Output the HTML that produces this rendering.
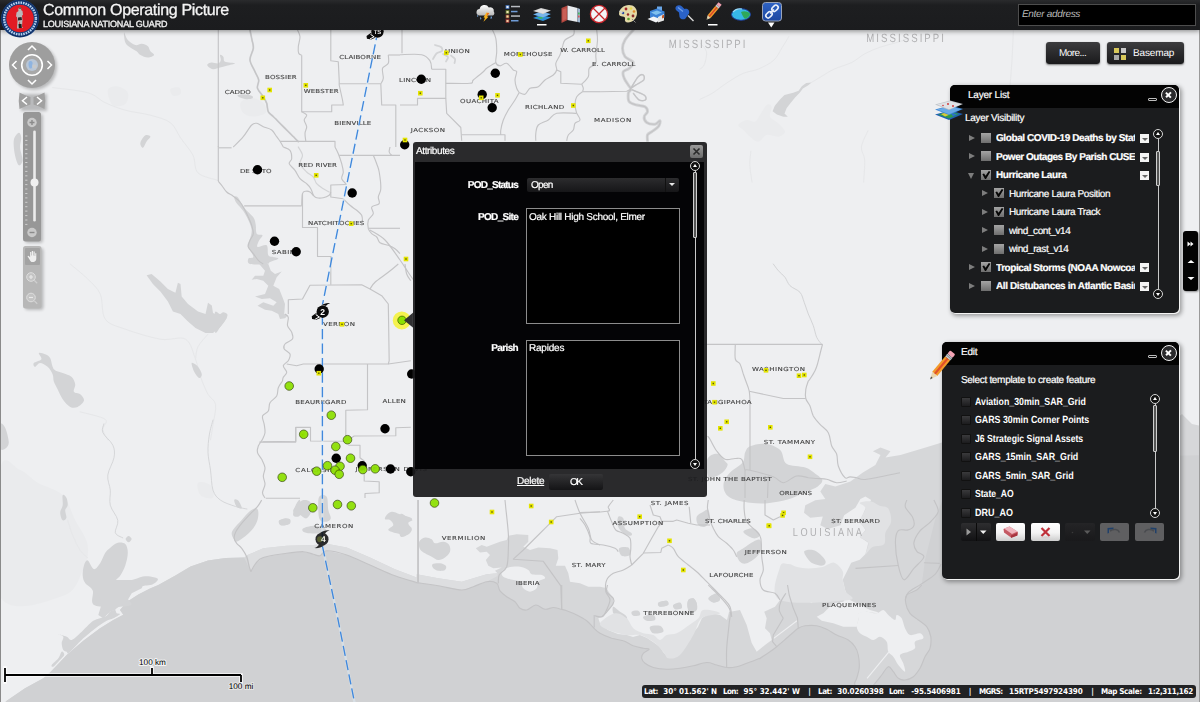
<!DOCTYPE html>
<html lang="en">
<head>
<meta charset="utf-8">
<title>Common Operating Picture - Louisiana National Guard</title>
<style>
*{box-sizing:border-box}
html,body{margin:0;padding:0}
body{text-rendering:geometricPrecision;width:1200px;height:702px;overflow:hidden;position:relative;background:#eeeff1;font-family:"Liberation Sans",sans-serif;font-size:10px;color:#fff}
.abs{position:absolute}
#map{position:absolute;left:0;top:0;width:1200px;height:702px}
#edgeL{position:absolute;left:0;top:0;width:1px;height:702px;background:#8a8a8a}
#edgeR{position:absolute;left:1199px;top:0;width:1px;height:702px;background:#9a9a9a}
#hdr{position:absolute;left:0;top:0;width:1200px;height:30px;background:linear-gradient(#2a2b2d 0,#1d1e20 5px,#1b1c1e 100%);box-shadow:0 1px 5px rgba(0,0,0,.45)}
#title{position:absolute;left:43px;top:0.500px;font-size:16px;line-height:20px;letter-spacing:-0.33px;color:#f4f4f4;white-space:nowrap;-webkit-text-stroke:.3px #f4f4f4}
#sub{position:absolute;left:43px;top:18px;font-size:9px;line-height:12px;letter-spacing:-0.2px;color:#f0f0f0;white-space:nowrap;-webkit-text-stroke:.35px #f0f0f0}
#search{position:absolute;left:1018px;top:4px;width:178px;height:22px;background:#000;border:1px solid #4d4d4d;color:#b9b9b9;font-style:italic;font-size:10px;line-height:20px;padding-left:3px;white-space:nowrap}
.btn{position:absolute;height:22px;border-radius:3px;background:linear-gradient(#3c3c3e,#1a1a1c);box-shadow:0 1px 2px rgba(0,0,0,.5);color:#fff;font-size:10px;line-height:22px;white-space:nowrap}
.panel{position:absolute;background:#1b1c1e;border-radius:5px;box-shadow:1px 1px 0 0 #f4f4f4,2px 2px 4px 1px rgba(0,0,0,.35)}
.panel .tb{position:absolute;left:0;top:0;right:0;height:23px;background:#030303;border-radius:5px 5px 0 0}
.t{position:absolute;white-space:nowrap;line-height:12px;font-size:10px;color:#fff;-webkit-text-stroke:.2px #fff}
.b{font-weight:bold}
.close{position:absolute;width:16px;height:16px;border-radius:50%;border:1.5px solid #f2f2f2;background:#2a2a2c}
.close:before,.close:after{content:"";position:absolute;left:3.2px;top:5.6px;width:6.6px;height:1.8px;background:#fff;transform:rotate(45deg)}
.close:after{transform:rotate(-45deg)}
.mini{position:absolute;width:9px;height:3px;border:1px solid #bdbdbd;border-radius:1px}
.cb{position:absolute;width:10px;height:10px;background:linear-gradient(#a4a4a4,#6e6e6e)}
.ck:after{content:"";position:absolute;left:0;top:0;width:10px;height:10px;background:#060606;clip-path:polygon(14% 42%,30% 34%,46% 58%,78% 10%,94% 18%,50% 90%,40% 90%)}
.cbd{position:absolute;width:10px;height:10px;background:linear-gradient(#3a3a3c,#1c1c1e);border:1px solid #111;border-radius:1px}
.tri-r{position:absolute;width:0;height:0;border-left:6px solid #7d7d7d;border-top:3.5px solid transparent;border-bottom:3.5px solid transparent}
.tri-d{position:absolute;width:0;height:0;border-top:6px solid #7d7d7d;border-left:3.5px solid transparent;border-right:3.5px solid transparent}
.menu{position:absolute;width:9px;height:9px;background:#f4f4f4}
.menu:after{content:"";position:absolute;left:1.5px;top:3.5px;border-top:3.5px solid #666;border-left:3px solid transparent;border-right:3px solid transparent}
.sc{position:absolute;width:10px;height:10px;border-radius:50%;border:1px solid #d8d8d8;background:#111}
.sc.up:after{content:"";position:absolute;left:1.5px;top:1.5px;border-bottom:3.5px solid #fff;border-left:2.5px solid transparent;border-right:2.5px solid transparent}
.sc.dn:after{content:"";position:absolute;left:1.5px;top:2.5px;border-top:3.5px solid #fff;border-left:2.5px solid transparent;border-right:2.5px solid transparent}
.strack{position:absolute;width:1px;background:#c8c8c8}
.sthumb{position:absolute;width:4px;border:1px solid #cfcfcf;background:#555;border-radius:1px}
</style>
</head>
<body>
<svg id="map" width="1200" height="702" viewBox="0 0 1200 702">
<rect width="1200" height="702" fill="#eeeff1"/>
<g fill="#eaebed"><path d="M738.3 125.0C738.9 123.3 743.9 120.6 746.7 120.0C749.4 119.4 752.8 122.5 755.0 121.7C757.2 120.8 758.1 117.8 760.0 115.0C761.9 112.2 764.7 106.4 766.7 105.0C768.6 103.6 771.1 104.7 771.7 106.7C772.2 108.6 768.9 113.9 770.0 116.7C771.1 119.4 775.8 120.8 778.3 123.3C780.8 125.8 785.0 129.4 785.0 131.7C785.0 133.9 781.4 136.1 778.3 136.7C775.3 137.2 770.0 134.2 766.7 135.0C763.3 135.8 761.1 141.4 758.3 141.7C755.6 141.9 752.5 138.6 750.0 136.7C747.5 134.7 745.3 131.9 743.3 130.0C741.4 128.1 737.8 126.7 738.3 125.0Z"/><path d="M107.8 90.2C108.6 87.0 114.5 86.0 117.8 86.4C121.1 86.8 126.6 89.7 127.8 92.7C129.1 95.6 127.8 101.8 125.3 103.9C122.8 106.0 115.7 107.5 112.8 105.2C109.9 102.9 106.9 93.3 107.8 90.2Z"/><path d="M170.4 88.9C171.5 87.6 177.5 86.8 179.2 87.6C180.9 88.5 181.5 92.6 180.5 93.9C179.4 95.2 174.6 96.5 172.9 95.7C171.3 94.8 169.4 90.2 170.4 88.9Z"/><path d="M240.6 102.7C241.9 100.2 246.9 97.7 250.6 97.7C254.4 97.7 260.7 100.2 263.2 102.7C265.7 105.2 267.3 110.4 265.7 112.7C264.0 115.0 256.9 116.5 253.1 116.5C249.4 116.5 245.2 115.0 243.1 112.7C241.0 110.4 239.3 105.2 240.6 102.7Z"/><path d="M0.0 470.1C3.3 449.2 13.8 468.0 20.1 470.1C26.3 472.2 30.5 478.5 37.6 482.7C44.7 486.8 56.4 488.9 62.7 495.2C68.9 501.5 71.0 511.9 75.2 520.3C79.4 528.6 86.5 537.0 87.7 545.3C89.0 553.7 86.9 561.9 82.7 570.4C78.5 578.8 76.4 591.7 62.7 595.9C48.9 600.2 10.4 616.9 0.0 595.9C-10.4 575.0 -3.3 491.1 0.0 470.1Z"/><path d="M198.0 482.7C199.7 481.0 208.0 482.7 210.5 485.2C213.0 487.7 214.7 496.0 213.0 497.7C211.4 499.4 203.0 497.7 200.5 495.2C198.0 492.7 196.3 484.3 198.0 482.7Z"/></g>
<g fill="none" stroke="#e6e7e9" stroke-linecap="round" stroke-linejoin="round"><path d="M70.2 264.0C73.1 266.5 82.7 274.0 87.7 279.0C92.7 284.1 97.3 287.4 100.3 294.1C103.2 300.8 101.1 313.3 105.3 319.1C109.4 325.0 116.1 325.8 125.3 329.2C134.5 332.5 150.4 337.5 160.4 339.2C170.4 340.9 179.6 335.8 185.5 339.2C191.3 342.5 193.0 353.0 195.5 359.2C198.0 365.5 198.4 370.9 200.5 376.8C202.6 382.6 205.5 389.7 208.0 394.3C210.5 398.9 214.7 399.3 215.5 404.4C216.4 409.4 213.9 418.5 213.0 424.4C212.2 430.3 210.9 437.4 210.5 439.9" stroke-width="1.0"/><path d="M208.0 334.2C206.3 336.3 200.1 342.5 198.0 346.7C195.9 350.9 195.9 357.1 195.5 359.2" stroke-width="1.0"/><path d="M80.2 411.9C84.4 413.1 101.5 416.5 105.3 419.4C109.0 422.3 102.3 426.0 102.8 429.4C103.2 432.8 106.9 438.2 107.8 439.9" stroke-width="1.0"/><path d="M52.6 87.6C58.5 88.5 78.9 90.2 87.7 92.7C96.5 95.2 99.0 99.8 105.3 102.7C111.5 105.6 117.8 108.1 125.3 110.2C132.8 112.3 142.9 113.1 150.4 115.2C157.9 117.3 165.4 119.0 170.4 122.7C175.4 126.5 176.7 132.3 180.5 137.8C184.2 143.2 190.1 149.5 193.0 155.3C195.9 161.2 193.8 168.7 198.0 172.9C202.2 177.0 214.7 179.1 218.0 180.4" stroke-width="1.0"/><path d="M67.7 520.3C68.5 522.8 70.6 530.3 72.7 535.3C74.8 540.3 77.7 546.6 80.2 550.3C82.7 554.1 86.5 556.6 87.7 557.8" stroke-width="1.0"/><path d="M811.6 82.4C813.2 81.5 817.5 78.8 821.3 76.6C825.1 74.3 829.3 71.3 834.3 69.0C839.4 66.7 846.6 65.0 851.7 62.5C856.7 60.0 860.0 56.4 864.7 53.8C869.4 51.3 874.8 49.1 879.8 47.3C884.9 45.5 890.3 44.4 895.0 43.0C899.7 41.6 905.8 39.4 908.0 38.7" stroke-width="1.0"/><path d="M788.8 36.5C787.8 38.3 784.9 43.4 782.3 47.3C779.8 51.3 777.6 56.7 773.7 60.3C769.7 63.9 763.6 66.8 758.5 69.0C753.4 71.2 748.4 71.2 743.3 73.3C738.3 75.5 733.2 78.8 728.2 82.0C723.1 85.2 717.7 89.9 713.0 92.8C708.3 95.7 702.2 98.2 700.0 99.3" stroke-width="1.0"/><path d="M700.0 43.0C701.1 44.4 705.8 48.1 706.5 51.7C707.2 55.3 705.4 61.8 704.3 64.7C703.2 67.6 700.7 68.3 700.0 69.0" stroke-width="1.0"/><path d="M750.9 151.3C750.7 153.5 749.7 159.2 749.8 164.3C750.0 169.5 751.6 179.1 752.0 182.1" stroke-width="1.0"/><path d="M867.9 130.8C866.8 133.5 862.0 142.1 861.4 147.0C860.9 151.9 864.3 154.2 864.7 160.0C865.0 165.8 863.8 178.4 863.6 182.1" stroke-width="1.0"/><path d="M1013.5 28.0C1013.2 33.3 1012.6 50.3 1012.0 60.0C1011.4 69.7 1010.3 81.7 1010.0 86.0" stroke-width="1"/></g>
<g fill="#d6d7d9"><path d="M-5 712 L6.7 700.8 L25 688.3 L43.3 678.3 L50 672.5 L66.7 655 L83.3 640.8 L100 628.3 L113.3 620 L123.3 614.7 L120 610 L126.7 602 L138.3 594.5 L150 588.5 L158.3 585 L175.4 575.4 L190.5 566.6 L208 560.4 L225.6 557.9 L244 557.4 L247.5 555 L263.3 548.3 L286.7 545.8 L313.3 545 L326.7 543.7 L346.7 547.5 L370 557.5 L395 569.2 L416.7 577.5 L416.7 574.2 L438.3 578.3 L461.7 581.7 L473.3 578.3 L486.7 574.2 L497.5 573.3 L495 570.8 L501.7 567.5 L493.3 568.3 L488.3 565.8 L485.8 560 L490 555 L486.7 551.7 L480 552.5 L475.8 548.3 L481.7 545 L486.7 546.7 L493.3 544.2 L500 541.7 L506.7 540 L508.3 535.8 L516.7 534.2 L528.3 535 L528.3 541.7 L523.3 546.7 L530 550 L538.3 547.5 L550 548.3 L557.5 550 L558.3 558.3 L555.8 565.8 L565 565.8 L568.3 573.3 L570 581.7 L580 583.3 L588.3 586.7 L600 586.7 L606 588 L613 598 L613.3 605 L608.3 610 L603.3 616.7 L598.3 618.3 L600 623.3 L608 630 L618 634 L627 635 L633 637 L640 635 L647 638 L653 642 L660 647 L663 652 L668 657 L677 652 L683 643 L690 640 L693 633 L698 627 L702 618 L710 613 L720 615 L727 620 L729 612 L740 610 L746.7 625 L751.7 643 L756.7 651.7 L765 645 L771.7 640 L770 633.3 L765 628.3 L766.7 618.3 L764.2 611.7 L775 606.7 L780 600 L783.3 595 L788.3 591.7 L793.3 595 L800 593.3 L806.7 600 L811.7 603.3 L816.7 596.7 L825 595 L833.3 593.3 L840 591.7 L846.7 596.7 L843.3 601.7 L833.3 603.3 L828.3 608.3 L823.3 613.3 L816.7 616.7 L821.7 620.8 L833.3 623.3 L843.3 626.7 L856.7 626.7 L858.3 620 L858.3 613.3 L866.7 611.7 L876.7 613.3 L883.3 610 L888.3 615 L888 615 L870 610 L850 600 L845.5 591.2 L842.7 579.8 L847 571.2 L851.2 562.7 L859.8 559.8 L865.5 554.1 L868.3 542.7 L859.8 537 L865.5 529.9 L859.8 521.4 L865.5 508.5 L871.2 500 L865.4 496.4 L860.4 498.9 L855.4 507.7 L844.1 515.2 L840.4 525.2 L827.8 529 L820.3 525.2 L822.8 516.4 L810.3 517.7 L804 512.7 L805.3 505.2 L815.3 500.2 L825.3 498.9 L820.3 491.4 L825.3 483.9 L835.3 486.4 L850.4 481.4 L862.9 472.6 L875.4 465.1 L880.5 455 L872.9 451.3 L880.5 447.5 L890.5 451.3 L885.5 457.5 L900.5 455 L925.6 447.5 L941.9 442.5 L960 441 L1000 440 L1100 436 L1165 428 L1182 414 L1192 424 L1210 428 L1210 712.0Z"/></g>
<g fill="#d0d1d3"><path d="M-5 712 L6.7 700.8 L25 688.3 L43.3 678.3 L50 672.5 L66.7 655 L83.3 640.8 L100 628.3 L113.3 620 L123.3 614.7 L120 610 L126.7 602 L138.3 594.5 L150 588.5 L158.3 585 L175.4 575.4 L190.5 566.6 L208 560.4 L225.6 557.9 L244 557.4 L250.8 571.7 L255.8 563.3 L263.3 557.5 L286.7 553.3 L303.3 551.7 L313.3 554.2 L320 555.8 L326.7 550.8 L346.7 555 L370 565 L395 575.8 L416.7 582.5 L416.7 582.5 L438.3 585.8 L461.7 590 L473.3 586.7 L486.7 581.7 L496.7 583.3 L500 590.8 L506.7 596.7 L515 601.7 L520 608.3 L526.7 610 L535.8 605 L545 609.2 L553.3 607.5 L560.8 609.2 L566.7 610.8 L576.7 615 L586.7 620.8 L593.3 627.5 L600 633.3 L611.7 638.3 L623.3 640.8 L633.3 645.8 L643.3 648.3 L649.2 649.2 L643.3 653.3 L641.7 658.3 L645 663.3 L653.3 667.5 L666.7 669.2 L680 668.3 L693.3 665.8 L706.7 662.5 L716.7 665 L726.7 667.5 L736.7 666.7 L746.7 663.3 L760 658.3 L760 658.3 L770 651.7 L776.7 646.7 L788.3 636.7 L798.3 628.3 L805 625.8 L816.7 625.8 L826.7 629.2 L836.7 635 L848.3 640 L855 646.7 L858.3 655 L859.2 668.3 L856.7 678.3 L855 685 L866.7 691.7 L875 683.3 L881.7 675 L888.3 666.7 L893.3 671.7 L898.3 678.3 L905 680 L913.3 676.7 L920 668.3 L925 656.7 L930 648.3 L930.8 636.7 L926.7 626.7 L918.3 620 L910 613.3 L905.8 603.3 L906.7 595 L916.7 590 L921.7 585 L925 560 L935 520 L950 480 L960 460 L1210 455 L1210 712.0Z"/></g>
<g fill="#d3d4d6"><path d="M207.5 64.2C208.1 63.5 209.9 62.6 211.7 62.5C213.5 62.4 216.8 63.8 218.3 63.3C219.9 62.9 220.6 61.4 220.8 60.0C221.1 58.6 219.6 55.6 220.0 55.0C220.4 54.4 222.5 55.6 223.3 56.7C224.2 57.8 223.1 60.6 225.0 61.7C226.9 62.8 234.7 62.6 235.0 63.3C235.3 64.0 229.2 65.1 226.7 65.8C224.2 66.5 222.2 66.9 220.0 67.5C217.8 68.1 215.3 69.3 213.3 69.2C211.4 69.0 209.3 67.5 208.3 66.7C207.4 65.8 206.9 64.9 207.5 64.2Z"/><path d="M237.5 95.3C238.1 94.8 241.0 94.1 243.3 94.2C245.7 94.2 250.1 95.1 251.7 95.8C253.2 96.5 253.3 97.8 252.5 98.3C251.7 98.9 248.8 99.3 246.7 99.2C244.6 99.0 241.5 98.1 240.0 97.5C238.5 96.9 236.9 95.9 237.5 95.3Z"/><path d="M234.2 197.0C234.4 196.2 236.2 195.9 237.5 197.0C238.8 198.1 240.4 201.7 241.7 203.7C242.9 205.6 243.6 207.0 245.0 208.7C246.4 210.3 248.5 212.0 250.0 213.7C251.5 215.3 253.2 216.7 254.2 218.7C255.1 220.6 255.4 222.8 255.8 225.3C256.2 227.8 255.6 232.0 256.7 233.7C257.8 235.3 262.1 234.2 262.5 235.3C262.9 236.4 260.0 238.4 259.2 240.3C258.3 242.3 256.2 246.2 257.5 247.0C258.8 247.8 264.9 243.9 266.7 245.3C268.5 246.7 267.2 253.4 268.3 255.3C269.4 257.3 271.7 256.4 273.3 257.0C275.0 257.6 278.9 257.8 278.3 258.7C277.8 259.5 271.9 261.1 270.0 262.0C268.1 262.9 270.0 263.7 266.7 264.0C263.3 264.3 253.1 264.9 250.0 264.0C246.9 263.1 247.8 259.8 248.3 258.7C248.9 257.5 253.1 258.4 253.3 257.0C253.6 255.6 251.0 252.3 250.0 250.3C249.0 248.4 247.5 247.3 247.5 245.3C247.5 243.4 249.3 241.2 250.0 238.7C250.7 236.2 251.8 233.1 251.7 230.3C251.5 227.6 250.3 224.8 249.2 222.0C248.1 219.2 246.5 216.2 245.0 213.7C243.5 211.2 241.5 208.9 240.0 207.0C238.5 205.1 236.8 203.7 235.8 202.0C234.9 200.3 233.9 197.8 234.2 197.0Z"/><path d="M259.2 264 L268.3 264 L270.8 270.7 L275 274 L281.7 271.5 L276.7 277.3 L273.3 285.7 L279.2 289 L282.5 297.3 L285 304 L284.2 314 L287.5 315.7 L285 318.2 L280 319 L278.3 314 L271.7 310.7 L265 309.8 L257.5 305.7 L263.3 302.3 L273.3 305.7 L276.7 302.3 L270 298.2 L261.7 299 L255 296.5 L265 294 L268.3 285.7 L263.3 280.7 L256.7 279 L251.7 279.8 L255 275.7 L263.3 275.7 L265 270.7Z"/><path d="M215.0 312.3C215.8 309.6 218.6 314.0 220.0 314.0C221.4 314.0 222.1 312.2 223.3 312.3C224.6 312.5 227.2 313.4 227.5 314.8C227.8 316.2 226.2 318.6 225.0 320.7C223.8 322.8 221.4 325.4 220.0 327.3C218.6 329.3 217.5 331.8 216.7 332.3C215.8 332.9 215.3 334.0 215.0 330.7C214.7 327.3 214.2 315.1 215.0 312.3Z"/><path d="M231.7 533.3C231.8 531.7 232.5 530.6 234.2 528.3C235.8 526.1 239.2 522.8 241.7 520.0C244.2 517.2 246.8 513.6 249.2 511.7C251.5 509.7 254.3 508.3 255.8 508.3C257.4 508.3 258.1 509.7 258.3 511.7C258.6 513.6 258.3 517.2 257.5 520.0C256.7 522.8 255.1 525.8 253.3 528.3C251.5 530.8 248.9 533.1 246.7 535.0C244.4 536.9 241.8 538.9 240.0 540.0C238.2 541.1 236.9 541.9 235.8 541.7C234.7 541.4 234.0 539.7 233.3 538.3C232.6 536.9 231.5 535.0 231.7 533.3Z"/><path d="M234.2 500.0C234.0 501.1 235.4 505.3 236.7 506.7C237.9 508.1 241.1 508.9 241.7 508.3C242.2 507.8 240.7 504.7 240.0 503.3C239.3 501.9 238.5 500.6 237.5 500.0C236.5 499.4 234.3 498.9 234.2 500.0Z"/><path d="M319.2 496.7C320.6 494.4 325.1 494.4 326.7 496.7C328.2 498.9 327.6 506.4 328.3 510.0C329.0 513.6 331.1 516.4 330.8 518.3C330.6 520.3 328.5 521.4 326.7 521.7C324.9 521.9 321.4 521.9 320.0 520.0C318.6 518.1 318.5 513.9 318.3 510.0C318.2 506.1 317.8 498.9 319.2 496.7Z"/><path d="M303.3 528.3C305.0 527.4 310.0 526.0 313.3 525.8C316.7 525.7 321.1 526.5 323.3 527.5C325.6 528.5 327.2 530.7 326.7 531.7C326.1 532.6 322.8 533.1 320.0 533.3C317.2 533.6 312.8 533.6 310.0 533.3C307.2 533.1 304.4 532.5 303.3 531.7C302.2 530.8 301.7 529.3 303.3 528.3Z"/><path d="M293.3 510.0C293.9 508.3 296.7 505.0 298.3 503.3C300.0 501.7 301.4 500.3 303.3 500.0C305.3 499.7 308.6 500.0 310.0 501.7C311.4 503.3 312.2 507.2 311.7 510.0C311.1 512.8 308.6 517.5 306.7 518.3C304.7 519.2 301.9 515.8 300.0 515.0C298.1 514.2 296.1 514.2 295.0 513.3C293.9 512.5 292.8 511.7 293.3 510.0Z"/><path d="M279.2 520.8C280.0 519.7 284.0 518.5 285.8 518.3C287.6 518.2 289.6 519.0 290.0 520.0C290.4 521.0 289.9 523.3 288.3 524.2C286.8 525.0 282.4 525.6 280.8 525.0C279.3 524.4 278.3 521.9 279.2 520.8Z"/><path d="M386.7 515.0C387.8 513.8 389.4 511.8 391.7 511.7C393.9 511.5 396.7 513.1 400.0 514.2C403.3 515.3 410.3 516.8 411.7 518.3C413.1 519.9 408.3 521.4 408.3 523.3C408.3 525.3 411.9 528.1 411.7 530.0C411.4 531.9 409.2 534.4 406.7 535.0C404.2 535.6 399.7 534.2 396.7 533.3C393.6 532.5 388.9 531.4 388.3 530.0C387.8 528.6 393.1 526.7 393.3 525.0C393.6 523.3 391.4 521.0 390.0 520.0C388.6 519.0 385.6 520.0 385.0 519.2C384.4 518.3 385.6 516.2 386.7 515.0Z"/><path d="M419.2 541.7C420.0 539.7 422.9 537.9 425.0 537.5C427.1 537.1 430.0 538.2 431.7 539.2C433.3 540.1 433.1 542.9 435.0 543.3C436.9 543.8 441.0 541.4 443.3 541.7C445.7 541.9 448.1 543.3 449.2 545.0C450.3 546.7 450.7 549.6 450.0 551.7C449.3 553.8 446.9 556.1 445.0 557.5C443.1 558.9 440.6 560.1 438.3 560.0C436.1 559.9 433.9 557.8 431.7 556.7C429.4 555.6 426.9 554.6 425.0 553.3C423.1 552.1 421.0 551.1 420.0 549.2C419.0 547.2 418.3 543.6 419.2 541.7Z"/><path d="M432.5 564.2C433.6 563.3 437.8 563.1 440.0 563.3C442.2 563.6 445.0 564.7 445.8 565.8C446.7 566.9 446.2 569.2 445.0 570.0C443.8 570.8 440.3 571.1 438.3 570.8C436.4 570.6 434.3 569.4 433.3 568.3C432.4 567.2 431.4 565.0 432.5 564.2Z"/><path d="M400.0 515.0C401.1 511.8 404.6 515.8 406.7 516.7C408.8 517.5 412.5 518.9 412.5 520.0C412.5 521.1 406.8 521.9 406.7 523.3C406.5 524.7 411.4 526.5 411.7 528.3C411.9 530.1 410.3 532.9 408.3 534.2C406.4 535.4 401.4 539.0 400.0 535.8C398.6 532.6 398.9 518.2 400.0 515.0Z"/><path d="M696.7 516.7C697.5 514.4 701.4 512.8 703.3 511.7C705.3 510.6 707.2 508.6 708.3 510.0C709.4 511.4 710.6 517.2 710.0 520.0C709.4 522.8 706.9 525.8 705.0 526.7C703.1 527.5 699.7 526.7 698.3 525.0C696.9 523.3 695.8 518.9 696.7 516.7Z"/><path d="M736.7 553.3C737.2 551.1 740.6 550.3 743.3 548.3C746.1 546.4 750.6 543.1 753.3 541.7C756.1 540.3 758.6 538.9 760.0 540.0C761.4 541.1 762.2 545.6 761.7 548.3C761.1 551.1 759.2 554.2 756.7 556.7C754.2 559.2 749.4 562.5 746.7 563.3C743.9 564.2 741.7 563.3 740.0 561.7C738.3 560.0 736.1 555.6 736.7 553.3Z"/><path d="M743.3 531.7C743.3 530.0 750.6 527.8 753.3 528.3C756.1 528.9 760.0 533.3 760.0 535.0C760.0 536.7 756.1 538.9 753.3 538.3C750.6 537.8 743.3 533.3 743.3 531.7Z"/><path d="M618.3 516.7C619.3 515.6 622.2 516.4 623.3 518.3C624.4 520.3 623.6 525.8 625.0 528.3C626.4 530.8 630.8 532.1 631.7 533.3C632.5 534.6 631.7 536.1 630.0 535.8C628.3 535.6 623.8 533.5 621.7 531.7C619.6 529.9 618.1 527.5 617.5 525.0C616.9 522.5 617.4 517.8 618.3 516.7Z"/><path d="M619.2 548.3C620.3 546.9 626.5 546.4 628.3 547.5C630.1 548.6 631.1 553.6 630.0 555.0C628.9 556.4 623.5 556.9 621.7 555.8C619.9 554.7 618.1 549.7 619.2 548.3Z"/><path d="M658.3 602.5C659.4 601.5 665.1 600.4 666.7 600.8C668.2 601.2 668.6 604.0 667.5 605.0C666.4 606.0 661.5 607.1 660.0 606.7C658.5 606.2 657.2 603.5 658.3 602.5Z"/><path d="M673.3 605.0C674.2 604.0 678.6 602.8 680.0 603.3C681.4 603.9 682.5 607.4 681.7 608.3C680.8 609.3 676.4 609.7 675.0 609.2C673.6 608.6 672.5 606.0 673.3 605.0Z"/><path d="M688.3 600.0C689.3 598.6 691.9 597.8 693.3 598.3C694.7 598.9 696.1 601.4 696.7 603.3C697.2 605.3 697.8 608.3 696.7 610.0C695.6 611.7 691.5 613.9 690.0 613.3C688.5 612.8 687.8 608.9 687.5 606.7C687.2 604.4 687.4 601.4 688.3 600.0Z"/><path d="M710.0 596.7C710.6 595.4 715.1 594.4 716.7 595.0C718.2 595.6 719.7 598.8 719.2 600.0C718.6 601.2 714.9 603.1 713.3 602.5C711.8 601.9 709.4 597.9 710.0 596.7Z"/><path d="M146.6 275.3 L151.6 274 L160.4 281.5 L167.9 289.1 L175.4 292.8 L177.9 282.8 L180.5 284.1 L181.7 296.6 L188 304.1 L198 311.6 L205.5 314.1 L208 302.8 L211.8 305.4 L213 312.9 L220.6 316.6 L225.6 314.1 L226.8 317.9 L220.6 326.7 L213 332.9 L205.5 332.9 L195.5 327.9 L188 321.6 L180.5 314.1 L172.9 311.6 L167.9 301.6 L160.4 291.6 L152.9 284.1Z"/><path d="M38.8 353.0C39.5 352.1 43.2 353.4 45.1 354.2C47.0 355.1 48.7 355.5 50.1 358.0C51.6 360.5 51.8 366.8 53.9 369.3C56.0 371.8 59.7 371.8 62.7 373.0C65.6 374.3 69.3 374.9 71.4 376.8C73.5 378.7 74.8 381.8 75.2 384.3C75.6 386.8 73.1 390.1 73.9 391.8C74.8 393.5 78.5 392.9 80.2 394.3C81.9 395.8 84.4 398.5 84.0 400.6C83.5 402.7 80.0 405.8 77.7 406.9C75.4 407.9 72.7 408.1 70.2 406.9C67.7 405.6 64.7 402.3 62.7 399.3C60.6 396.4 59.1 392.2 57.6 389.3C56.2 386.4 54.7 384.3 53.9 381.8C53.0 379.3 53.7 376.8 52.6 374.3C51.6 371.8 49.7 368.6 47.6 366.8C45.5 364.9 42.2 363.0 40.1 363.0C38.0 363.0 36.1 366.8 35.1 366.8C34.0 366.8 32.8 364.3 33.8 363.0C34.9 361.7 40.5 360.9 41.4 359.2C42.2 357.6 38.2 353.8 38.8 353.0Z"/><path d="M191.7 363.0C192.4 362.2 196.3 364.9 198.0 366.8C199.7 368.6 201.5 372.4 201.8 374.3C202.0 376.2 200.5 378.5 199.2 378.0C198.0 377.6 195.5 374.3 194.2 371.8C193.0 369.3 191.1 363.8 191.7 363.0Z"/><path d="M124.1 32.5C124.5 32.1 125.9 37.9 127.8 40.0C129.7 42.1 133.0 44.4 135.3 45.0C137.6 45.7 139.5 43.6 141.6 43.8C143.7 44.0 146.4 45.0 147.9 46.3C149.3 47.5 149.3 49.8 150.4 51.3C151.4 52.8 154.6 54.0 154.1 55.1C153.7 56.1 150.2 57.6 147.9 57.6C145.6 57.6 142.2 56.1 140.4 55.1C138.5 54.0 138.3 52.6 136.6 51.3C134.9 50.1 132.2 49.0 130.3 47.5C128.4 46.1 126.4 45.0 125.3 42.5C124.3 40.0 123.6 32.9 124.1 32.5Z"/><path d="M140.4 142.8C140.8 140.7 143.7 136.3 145.4 135.3C147.0 134.2 150.2 135.5 150.4 136.5C150.6 137.6 147.9 139.6 146.6 141.5C145.4 143.4 143.9 147.6 142.9 147.8C141.8 148.0 139.9 144.9 140.4 142.8Z"/><path d="M13.8 140.3C14.4 136.5 17.5 133.2 18.8 132.8C20.1 132.3 21.1 135.3 21.3 137.8C21.5 140.3 19.8 144.0 20.1 147.8C20.3 151.6 22.8 157.4 22.6 160.3C22.3 163.2 20.1 166.2 18.8 165.3C17.5 164.5 15.9 159.5 15.0 155.3C14.2 151.1 13.2 144.0 13.8 140.3Z"/><path d="M62.7 495.2C63.3 493.9 65.6 496.0 66.4 497.7C67.3 499.4 67.9 503.1 67.7 505.2C67.5 507.3 65.4 508.1 65.2 510.2C65.0 512.3 66.8 516.1 66.4 517.7C66.0 519.4 63.7 521.1 62.7 520.3C61.6 519.4 60.2 515.2 60.2 512.7C60.2 510.2 62.2 508.1 62.7 505.2C63.1 502.3 62.0 496.4 62.7 495.2Z"/><path d="M128.6 536.0C129.6 536.0 131.6 538.0 131.6 539.0C131.6 540.1 129.6 542.3 128.6 542.3C127.6 542.3 125.6 540.1 125.6 539.0C125.6 538.0 127.6 536.0 128.6 536.0Z"/><path d="M110.3 547.8C112.4 546.1 115.3 543.4 117.8 542.8C120.3 542.2 123.6 542.4 125.3 544.1C127.0 545.7 127.8 549.3 127.8 552.8C127.8 556.4 126.6 561.6 125.3 565.4C124.1 569.1 121.8 572.9 120.3 575.4C118.8 577.9 114.9 579.6 116.5 580.4C118.2 581.2 125.9 581.0 130.3 580.4C134.7 579.8 139.5 577.3 142.9 576.6C146.2 576.0 147.9 576.2 150.4 576.6C152.9 577.1 157.5 577.9 157.9 579.1C158.3 580.4 155.8 582.9 152.9 584.2C150.0 585.4 144.1 585.2 140.4 586.7C136.6 588.1 132.8 591.4 130.3 592.9C127.8 594.5 125.3 593.9 125.3 595.9C125.3 598.0 135.3 603.9 130.3 605.5C125.3 607.1 101.5 608.0 95.2 605.5C89.0 603.0 94.4 594.2 92.7 590.4C91.1 586.7 86.9 585.4 85.2 582.9C83.5 580.4 82.9 578.3 82.7 575.4C82.5 572.5 83.1 567.9 84.0 565.4C84.8 562.9 86.0 559.7 87.7 560.4C89.4 561.0 91.9 568.7 94.0 569.1C96.1 569.5 98.4 565.6 100.3 562.9C102.1 560.1 103.6 555.3 105.3 552.8C106.9 550.3 108.2 549.5 110.3 547.8Z"/><path d="M0.0 425.0C0.8 421.7 3.6 424.6 5.0 427.5C6.5 430.4 8.8 439.0 8.8 442.6C8.8 446.1 6.5 448.0 5.0 448.8C3.6 449.7 0.8 451.5 0.0 447.6C-0.8 443.6 -0.8 428.4 0.0 425.0Z"/><path d="M295.7 505.2C296.9 502.7 299.3 498.5 300.0 500.2C300.7 501.9 301.1 512.7 300.0 515.2C298.9 517.7 293.9 516.9 293.2 515.2C292.5 513.6 294.6 507.7 295.7 505.2Z"/><path d="M279.4 520.3C280.9 519.2 287.8 518.4 289.5 519.0C291.1 519.6 290.9 523.0 289.5 524.0C288.0 525.1 282.4 525.9 280.7 525.3C279.0 524.6 278.0 521.3 279.4 520.3Z"/><path d="M66.7 651.7C65.8 651.1 64.2 651.4 63.3 650.0C62.5 648.6 61.7 645.6 61.7 643.3C61.7 641.1 63.9 638.2 63.3 636.7C62.8 635.1 57.8 634.2 58.3 634.2C58.9 634.2 64.4 635.7 66.7 636.7C68.9 637.6 69.4 640.6 71.7 640.0C73.9 639.4 77.5 635.6 80.0 633.3C82.5 631.1 84.4 628.8 86.7 626.7C88.9 624.6 91.1 622.2 93.3 620.8C95.6 619.4 97.8 619.2 100.0 618.3C102.2 617.5 105.0 616.9 106.7 615.8C108.3 614.7 108.6 612.6 110.0 611.7C111.4 610.7 113.9 609.7 115.0 610.0C116.1 610.3 115.8 612.6 116.7 613.3C117.5 614.0 120.6 613.3 120.0 614.2C119.4 615.0 115.6 617.2 113.3 618.3C111.1 619.4 108.9 619.7 106.7 620.8C104.4 621.9 102.2 623.5 100.0 625.0C97.8 626.5 96.1 627.8 93.3 630.0C90.6 632.2 86.4 635.6 83.3 638.3C80.3 641.1 77.5 644.2 75.0 646.7C72.5 649.2 69.7 652.5 68.3 653.3C66.9 654.2 67.5 652.2 66.7 651.7Z"/><path d="M51.7 665.0C52.5 663.6 56.7 660.6 58.3 658.3C60.0 656.1 60.7 652.2 61.7 651.7C62.6 651.1 64.7 653.3 64.2 655.0C63.6 656.7 60.1 659.7 58.3 661.7C56.5 663.6 54.4 666.1 53.3 666.7C52.2 667.2 50.8 666.4 51.7 665.0Z"/><path d="M92.5 580 L96.7 591.7 L100 598.3 L100.8 606.7 L98.3 615 L103.3 618.3 L110 611.7 L115 610 L116.7 608.3 L126.7 601.7 L131.7 593.3 L141.7 588.3 L145 580.0Z"/><path d="M750.1 446.3C753.5 444.8 760.2 443.1 765.2 443.8C770.2 444.4 776.6 446.7 780.2 450.0C783.8 453.4 782.3 460.9 786.5 463.8C790.6 466.7 800.5 465.9 805.3 467.6C810.1 469.2 812.4 471.7 815.3 473.8C818.1 475.9 821.9 478.0 822.3 480.1C822.7 482.2 820.6 484.4 817.8 486.4C815.0 488.4 810.3 489.9 805.3 492.1C800.3 494.3 794.0 497.8 787.7 499.6C781.5 501.5 773.9 502.7 767.7 503.2C761.4 503.7 756.0 503.4 750.1 502.7C744.3 501.9 736.8 500.6 732.6 498.9C728.4 497.2 726.5 495.3 725.1 492.6C723.6 489.9 723.0 485.9 723.8 482.6C724.6 479.3 726.9 475.9 730.1 472.6C733.2 469.2 740.1 465.9 742.6 462.6C745.1 459.2 743.9 455.2 745.1 452.5C746.4 449.8 746.8 447.7 750.1 446.3Z"/><path d="M707.5 458.8C709.2 455.2 714.6 453.4 717.5 453.8C720.5 454.2 723.4 459.4 725.1 461.3C726.7 463.2 728.0 463.2 727.6 465.1C727.2 466.9 725.1 470.5 722.6 472.6C720.1 474.7 715.0 477.2 712.5 477.6C710.0 478.0 708.4 478.2 707.5 475.1C706.7 472.0 705.8 462.3 707.5 458.8Z"/><path d="M858.3 616.7C858.9 614.9 864.2 613.9 866.7 614.2C869.2 614.4 872.5 616.5 873.3 618.3C874.2 620.1 873.3 623.9 871.7 625.0C870.0 626.1 865.6 626.4 863.3 625.0C861.1 623.6 857.8 618.5 858.3 616.7Z"/><path d="M658.3 603.3C659.4 602.4 665.0 600.6 666.7 600.8C668.3 601.1 669.4 604.0 668.3 605.0C667.2 606.0 661.7 606.9 660.0 606.7C658.3 606.4 657.2 604.3 658.3 603.3Z"/><path d="M673.3 605.0C674.2 604.0 678.6 602.1 680.0 602.5C681.4 602.9 682.5 606.5 681.7 607.5C680.8 608.5 676.4 608.8 675.0 608.3C673.6 607.9 672.5 606.0 673.3 605.0Z"/><path d="M688.3 600.0C689.3 598.6 691.9 597.8 693.3 598.3C694.7 598.9 696.2 601.4 696.7 603.3C697.1 605.3 696.9 608.6 695.8 610.0C694.7 611.4 691.4 612.2 690.0 611.7C688.6 611.1 687.8 608.6 687.5 606.7C687.2 604.7 687.4 601.4 688.3 600.0Z"/><path d="M631.7 611.7C632.5 610.8 636.9 610.3 638.3 610.8C639.7 611.4 640.8 614.2 640.0 615.0C639.2 615.8 634.7 616.4 633.3 615.8C631.9 615.3 630.8 612.5 631.7 611.7Z"/><path d="M613.3 606.7C614.4 606.4 617.8 610.0 620.0 611.7C622.2 613.3 625.6 614.2 626.7 616.7C627.8 619.2 627.5 625.3 626.7 626.7C625.8 628.1 623.1 626.4 621.7 625.0C620.3 623.6 619.7 620.3 618.3 618.3C616.9 616.4 614.2 615.3 613.3 613.3C612.5 611.4 612.2 606.9 613.3 606.7Z"/><path d="M643.3 616.7C644.4 615.7 651.4 614.4 653.3 615.0C655.3 615.6 656.1 619.0 655.0 620.0C653.9 621.0 648.6 621.4 646.7 620.8C644.7 620.3 642.2 617.6 643.3 616.7Z"/><path d="M650.0 626.7C651.1 625.4 657.8 625.0 660.0 625.8C662.2 626.7 664.4 630.4 663.3 631.7C662.2 632.9 655.6 634.2 653.3 633.3C651.1 632.5 648.9 627.9 650.0 626.7Z"/><path d="M708.3 598.3C708.9 596.8 714.7 593.1 716.7 593.3C718.6 593.6 720.6 598.5 720.0 600.0C719.4 601.5 715.3 602.8 713.3 602.5C711.4 602.2 707.8 599.9 708.3 598.3Z"/><path d="M804.2 551.3C804.9 549.6 810.2 549.4 812.8 549.9C815.4 550.3 817.8 552.2 819.9 554.1C822.0 556.0 825.1 559.4 825.6 561.3C826.1 563.2 824.6 565.1 822.7 565.5C820.8 566.0 816.6 565.1 814.2 564.1C811.8 563.2 810.2 562.0 808.5 559.8C806.8 557.7 803.5 553.0 804.2 551.3Z"/><path d="M772.6 111.2 L774.8 105.8 L780.2 99.3 L784.5 95 L793.2 92.8 L798.6 90.7 L801.8 86.3 L806.2 83.1 L811.6 82.4 L808.3 85.2 L802.9 88.5 L799.7 92.8 L795.3 97.2 L791 102.6 L786.7 108 L784.5 113.4 L787.8 116.7 L783.4 116.7 L776.9 114.5Z"/></g>
<g fill="#e1e2e4"><path d="M859.8 502.8C860.7 501.7 867.9 500.9 871.2 501.4C874.5 501.9 876.9 504.5 879.7 505.7C882.6 506.9 886.4 505.9 888.3 508.5C890.2 511.2 891.6 517.3 891.1 521.4C890.7 525.4 886.6 529.0 885.4 532.8C884.3 536.6 886.2 541.8 884.0 544.2C881.9 546.5 875.7 545.4 872.6 547.0C869.5 548.7 866.2 554.9 865.5 554.1C864.8 553.4 869.3 545.6 868.3 542.7C867.4 539.9 860.3 539.2 859.8 537.0C859.3 534.9 865.5 532.5 865.5 529.9C865.5 527.3 859.8 524.9 859.8 521.4C859.8 517.8 865.5 511.6 865.5 508.5C865.5 505.5 858.8 504.0 859.8 502.8Z"/><path d="M780.0 567.0C781.4 561.0 785.7 564.1 788.5 564.1C791.4 564.1 793.8 566.3 797.1 567.0C800.4 567.7 804.2 568.4 808.5 568.4C812.8 568.4 818.5 567.9 822.7 567.0C827.0 566.0 830.8 562.0 834.1 562.7C837.5 563.4 841.3 568.4 842.7 571.2C844.1 574.1 842.2 576.5 842.7 579.8C843.2 583.1 844.6 587.8 845.5 591.2C846.5 594.6 859.3 598.6 848.4 600.0C837.5 601.5 791.4 605.5 780.0 600.0C768.6 594.5 778.6 573.0 780.0 567.0Z"/><path d="M600.0 623.3C601.1 620.6 610.6 614.2 615.0 613.3C619.4 612.5 623.6 615.8 626.7 618.3C629.7 620.8 630.6 625.8 633.3 628.3C636.1 630.8 640.0 632.2 643.3 633.3C646.7 634.4 650.6 633.9 653.3 635.0C656.1 636.1 657.8 640.0 660.0 640.0C662.2 640.0 663.9 636.1 666.7 635.0C669.4 633.9 673.3 634.7 676.7 633.3C680.0 631.9 683.1 629.2 686.7 626.7C690.3 624.2 695.6 621.1 698.3 618.3C701.1 615.6 699.7 610.8 703.3 610.0C706.9 609.2 720.3 611.9 720.0 613.3C719.7 614.7 706.1 614.7 701.7 618.3C697.2 621.9 696.9 628.9 693.3 635.0C689.7 641.1 684.2 651.1 680.0 655.0C675.8 658.9 671.1 658.9 668.3 658.3C665.6 657.8 665.8 654.4 663.3 651.7C660.8 648.9 657.2 644.4 653.3 641.7C649.4 638.9 644.4 636.1 640.0 635.0C635.6 633.9 631.9 635.8 626.7 635.0C621.4 634.2 612.8 631.9 608.3 630.0C603.9 628.1 598.9 626.1 600.0 623.3Z"/></g>
<g fill="#eeeff1"><path d="M501.7 571.7C502.5 570.1 505.3 568.3 508.3 567.5C511.4 566.7 516.7 566.2 520.0 566.7C523.3 567.1 526.4 568.8 528.3 570.0C530.3 571.2 529.4 573.3 531.7 574.2C533.9 575.0 539.4 574.3 541.7 575.0C543.9 575.7 545.6 577.2 545.0 578.3C544.4 579.4 539.7 580.0 538.3 581.7C536.9 583.3 538.1 586.7 536.7 588.3C535.3 590.0 532.2 591.7 530.0 591.7C527.8 591.7 525.0 590.0 523.3 588.3C521.7 586.7 522.2 583.2 520.0 581.7C517.8 580.1 512.8 580.0 510.0 579.2C507.2 578.3 504.7 577.9 503.3 576.7C501.9 575.4 500.8 573.2 501.7 571.7Z"/><path d="M858.3 613.3C859.7 611.9 863.6 611.7 866.7 611.7C869.7 611.7 873.9 613.6 876.7 613.3C879.4 613.1 881.4 609.7 883.3 610.0C885.3 610.3 886.4 613.3 888.3 615.0C890.3 616.7 893.6 620.0 895.0 620.0C896.4 620.0 895.6 615.3 896.7 615.0C897.8 614.7 900.3 616.1 901.7 618.3C903.1 620.6 903.6 625.6 905.0 628.3C906.4 631.1 907.5 634.2 910.0 635.0C912.5 635.8 917.8 632.8 920.0 633.3C922.2 633.9 924.2 636.9 923.3 638.3C922.5 639.7 916.4 640.0 915.0 641.7C913.6 643.3 916.1 646.7 915.0 648.3C913.9 650.0 910.8 650.6 908.3 651.7C905.8 652.8 900.8 653.1 900.0 655.0C899.2 656.9 902.5 660.6 903.3 663.3C904.2 666.1 905.8 671.4 905.0 671.7C904.2 671.9 900.3 667.5 898.3 665.0C896.4 662.5 895.0 658.9 893.3 656.7C891.7 654.4 889.4 654.2 888.3 651.7C887.2 649.2 888.1 644.2 886.7 641.7C885.3 639.2 882.2 636.9 880.0 636.7C877.8 636.4 875.6 640.0 873.3 640.0C871.1 640.0 868.9 637.8 866.7 636.7C864.4 635.6 861.7 635.0 860.0 633.3C858.3 631.7 856.9 628.9 856.7 626.7C856.4 624.4 858.1 622.2 858.3 620.0C858.6 617.8 856.9 614.7 858.3 613.3Z"/><path d="M888.3 651.7 L889.2 652.5 L867.5 678.7 L866.7 678.0Z"/><path d="M773.3 638 L796.7 620.3 L797.3 621.2 L774 638.8Z"/></g>
<g fill="#dddee0"><path d="M247.5 555 L263.3 548.3 L286.7 545.8 L313.3 545 L326.7 543.7 L346.7 547.5 L370 557.5 L395 569.2 L416.7 577.5 L416.7 574.2 L438.3 578.3 L461.7 581.7 L473.3 578.3 L486.7 574.2 L497.5 573.3 L497.5 576 L486.7 581.7 L473.3 586.7 L461.7 590 L438.3 585.8 L416.7 582.5 L400 577.5 L416.7 582.5 L395 575.8 L370 565 L346.7 555 L326.7 550.8 L320 555.8 L313.3 554.2 L303.3 551.7 L286.7 553.3 L263.3 557.5 L255.8 563.3 L250.8 571.7Z"/></g>
<g fill="none" stroke="#d3d4d6" stroke-linecap="round" stroke-linejoin="round"><path d="M250.0 30.0C250.3 31.7 251.4 36.9 252.0 40.0C252.6 43.1 253.7 45.0 253.3 48.3C253.0 51.7 249.7 56.1 250.0 60.0C250.3 63.9 253.6 68.3 255.0 71.7C256.4 75.0 258.2 77.2 258.7 80.0C259.1 82.8 256.7 85.6 257.5 88.3C258.3 91.1 261.8 94.2 263.3 96.7C264.9 99.2 265.8 100.8 266.7 103.3C267.5 105.8 267.2 109.4 268.3 111.7C269.4 113.9 271.4 114.7 273.3 116.7C275.3 118.6 277.5 120.8 280.0 123.3C282.5 125.8 285.8 129.2 288.3 131.7C290.8 134.2 293.3 136.7 295.0 138.3C296.7 140.0 297.8 141.1 298.3 141.7" stroke-width="1.8"/><path d="M435.0 45.0C436.0 45.3 439.8 46.0 441.0 47.0C442.2 48.0 442.8 49.9 442.0 51.0C441.2 52.1 438.0 52.2 436.5 53.5C435.0 54.8 433.6 58.1 433.0 59.0" stroke-width="1.8"/><path d="M443.0 54.0C443.8 54.5 447.5 55.8 448.0 57.0C448.5 58.2 446.3 60.8 446.0 61.5" stroke-width="1.8"/><path d="M451.0 55.5C451.7 56.1 454.4 57.8 455.0 59.0C455.6 60.2 454.6 62.3 454.5 63.0" stroke-width="1.8"/><path d="M633.3 30.0C631.9 31.7 626.8 36.9 625.0 40.0C623.2 43.1 622.5 45.6 622.5 48.3C622.5 51.1 623.2 54.3 625.0 56.7C626.8 59.0 632.6 60.6 633.3 62.5C634.0 64.4 630.8 66.8 629.2 68.3C627.5 69.9 624.2 70.0 623.3 71.7C622.5 73.3 623.3 76.1 624.2 78.3C625.0 80.6 627.2 83.2 628.3 85.0C629.4 86.8 630.8 87.8 630.8 89.2C630.8 90.6 628.6 91.2 628.3 93.3C628.1 95.4 627.8 99.7 629.2 101.7C630.6 103.6 634.0 104.2 636.7 105.0C639.3 105.8 643.2 105.6 645.0 106.7C646.8 107.8 647.6 110.0 647.5 111.7C647.4 113.3 644.3 114.9 644.2 116.7C644.0 118.5 644.9 121.2 646.7 122.5C648.5 123.8 652.8 124.4 655.0 124.2C657.2 123.9 659.4 120.4 660.0 120.8C660.6 121.2 659.7 124.9 658.3 126.7C656.9 128.5 653.5 130.3 651.7 131.7C649.9 133.1 648.2 133.5 647.5 135.0C646.8 136.5 647.5 139.9 647.5 140.8" stroke-width="3"/><path d="M630.8 88.3C632.1 86.4 636.2 78.9 638.3 76.7C640.4 74.4 642.4 74.4 643.3 75.0C644.2 75.6 644.9 78.3 643.7 80.0C642.4 81.7 638.0 83.6 635.8 85.0C633.7 86.4 631.7 87.8 630.8 88.3" stroke-width="1.5"/><path d="M631.7 89.7C632.5 90.0 634.4 90.6 636.7 91.7C638.9 92.7 643.6 94.4 645.0 95.8C646.4 97.2 646.3 99.3 645.3 100.0C644.4 100.7 641.2 101.1 639.2 100.0C637.2 98.9 634.3 94.4 633.3 93.3" stroke-width="1.5"/><path d="M298.3 147.0C299.0 148.4 302.2 152.6 302.5 155.3C302.8 158.1 299.3 160.9 300.0 163.7C300.7 166.4 304.4 169.8 306.7 172.0C308.9 174.2 311.7 175.1 313.3 177.0C315.0 178.9 315.0 181.7 316.7 183.7C318.3 185.6 321.2 187.3 323.3 188.7C325.4 190.1 328.2 191.4 329.2 192.0" stroke-width="1.2"/><path d="M773.3 264.0C774.2 265.1 776.4 268.4 778.3 270.7C780.3 272.9 783.1 274.8 785.0 277.3C786.9 279.8 787.5 283.2 790.0 285.7C792.5 288.2 797.6 289.6 800.0 292.3C802.4 295.1 802.8 298.7 804.2 302.3C805.6 305.9 806.8 310.1 808.3 314.0C809.9 317.9 811.9 321.8 813.3 325.7C814.7 329.6 815.3 334.2 816.7 337.3C818.1 340.4 820.8 343.2 821.7 344.3" stroke-width="1"/><path d="M104.0 423.8C103.8 425.2 101.3 429.0 102.8 432.5C104.2 436.1 110.9 440.9 112.8 445.1C114.7 449.2 114.9 452.6 114.0 457.6C113.2 462.6 108.4 469.7 107.8 475.1C107.1 480.6 109.9 485.2 110.3 490.2C110.7 495.2 109.0 500.2 110.3 505.2C111.5 510.2 117.0 515.7 117.8 520.3C118.6 524.8 114.5 529.9 115.3 532.8C116.1 535.7 121.6 537.0 122.8 537.8" stroke-width="0.9"/><path d="M213.0 420.0C212.4 422.5 210.1 429.6 209.3 435.0C208.4 440.5 207.8 446.7 208.0 452.6C208.2 458.4 209.7 463.9 210.5 470.1C211.4 476.4 211.4 485.2 213.0 490.2C214.7 495.2 216.8 497.5 220.6 500.2C224.3 502.9 231.2 505.0 235.6 506.5C240.0 507.9 245.0 508.6 246.9 509.0" stroke-width="0.9"/></g>
<g fill="none" stroke="#c4c4c6" stroke-width="1.15" stroke-linejoin="round"><path d="M218.3 30 L218.3 147.0"/><path d="M250.0 30.0C250.3 31.7 251.4 36.9 252.0 40.0C252.6 43.1 253.7 45.0 253.3 48.3C253.0 51.7 249.7 56.1 250.0 60.0C250.3 63.9 253.6 68.3 255.0 71.7C256.4 75.0 258.2 77.2 258.7 80.0C259.1 82.8 256.7 85.6 257.5 88.3C258.3 91.1 261.8 94.2 263.3 96.7C264.9 99.2 265.8 100.8 266.7 103.3C267.5 105.8 267.2 109.4 268.3 111.7C269.4 113.9 271.4 114.7 273.3 116.7C275.3 118.6 277.5 120.8 280.0 123.3C282.5 125.8 285.8 129.2 288.3 131.7C290.8 134.2 293.3 136.7 295.0 138.3C296.7 140.0 297.8 141.1 298.3 141.7"/><path d="M297.5 30.0C297.9 31.1 299.9 33.9 300.0 36.7C300.1 39.4 298.6 43.9 298.3 46.7C298.1 49.4 298.1 51.9 298.7 53.3C299.2 54.8 301.2 55.0 301.7 55.3"/><path d="M301.7 55.3 L301.7 111.7 L331.7 111.7 L331.7 105 L343.3 105 L342.5 100 L339.2 85 L339.2 80 L338.3 61.7 L330.8 60.8 L330.8 30.0"/><path d="M339.2 83.7 L380.8 83.7"/><path d="M380.8 83.7C381.3 82.8 383.1 80.9 383.3 78.3C383.6 75.8 381.7 70.8 382.5 68.3C383.3 65.8 387.4 65.6 388.3 63.3C389.3 61.1 388.3 56.4 388.3 55.0"/><path d="M388.3 55 L400 55.0"/><path d="M380.8 83.7 L381.7 105 L395.8 105 L395.8 147.0"/><path d="M301.7 111.7C302.5 112.2 306.2 113.6 306.7 115.0C307.1 116.4 304.2 118.1 304.2 120.0C304.2 121.9 306.5 124.4 306.7 126.7C306.8 128.9 305.1 130.9 305.0 133.3C304.9 135.8 305.7 140.0 305.8 141.3"/><path d="M280 141.3 L335 141.3 L335 147.0"/><path d="M233.3 147.0C235.0 145.3 240.3 140.3 243.3 136.7C246.4 133.0 249.4 127.2 251.7 125.0C253.9 122.8 254.7 123.1 256.7 123.3C258.6 123.6 260.8 125.6 263.3 126.7C265.8 127.8 269.4 128.3 271.7 130.0C273.9 131.7 275.3 134.8 276.7 136.7C278.1 138.6 278.9 139.6 280.0 141.3C281.1 143.1 282.8 146.1 283.3 147.0"/><path d="M402 30 L402 53.3"/><path d="M400.0 54.7C403.6 54.7 416.7 53.6 421.7 54.7C426.7 55.7 428.3 58.4 430.0 60.8C431.7 63.2 431.4 67.8 431.7 69.2"/><path d="M431.7 69.2 L445.8 69.2 L445.8 98.3 L417.5 98.3 L417.5 105 L400 105.0"/><path d="M445.8 83.3C449.9 83.3 465.4 83.9 470.0 83.3C474.6 82.8 471.1 81.9 473.3 80.0C475.6 78.1 481.1 73.6 483.3 71.7C485.6 69.7 484.6 69.9 486.7 68.3C488.8 66.8 494.3 63.5 495.8 62.5"/><path d="M492.5 30.0C493.1 31.4 495.1 34.7 495.8 38.3C496.5 41.9 496.7 47.6 496.7 51.7C496.7 55.7 495.3 60.1 495.8 62.5C496.4 64.9 498.2 65.7 500.0 65.8C501.8 66.0 504.4 62.6 506.7 63.3C508.9 64.0 511.7 68.6 513.3 70.0C515.0 71.4 516.4 70.0 516.7 71.7C516.9 73.3 515.0 77.2 515.0 80.0C515.0 82.8 516.0 86.3 516.7 88.3C517.4 90.4 518.8 91.8 519.2 92.5"/><path d="M519.2 92.5C518.5 93.8 516.8 97.1 515.0 100.0C513.2 102.9 510.3 106.7 508.3 110.0C506.4 113.3 504.6 116.7 503.3 120.0C502.1 123.3 501.2 127.5 500.8 130.0C500.4 132.5 500.8 134.2 500.8 135.0"/><path d="M519.2 92.5C520.1 92.8 523.2 94.9 525.0 94.2C526.8 93.5 527.8 89.6 530.0 88.3C532.2 87.1 535.8 88.1 538.3 86.7C540.8 85.3 542.5 81.9 545.0 80.0C547.5 78.1 551.4 76.7 553.3 75.0C555.3 73.3 556.2 71.9 556.7 70.0C557.1 68.1 555.3 65.8 555.8 63.3C556.4 60.8 558.9 57.8 560.0 55.0C561.1 52.2 561.7 49.2 562.5 46.7C563.3 44.2 563.2 41.9 565.0 40.0C566.8 38.1 571.8 36.7 573.3 35.0C574.9 33.3 574.0 30.8 574.2 30.0"/><path d="M556.7 70 L560.8 71.7 L560.8 83.3 L581.7 84.2"/><path d="M581.7 84.2C581.9 84.9 583.2 87.1 583.3 88.3C583.5 89.6 582.6 91.1 582.5 91.7"/><path d="M582.5 91.7 L600 91.7"/><path d="M581.7 84.2C582.8 82.9 587.1 79.3 588.3 76.7C589.6 74.0 587.9 70.6 589.2 68.3C590.4 66.1 594.7 65.6 595.8 63.3C596.9 61.1 595.6 58.9 595.8 55.0C596.1 51.1 597.4 44.2 597.5 40.0C597.6 35.8 596.8 31.7 596.7 30.0"/><path d="M582.5 91.7C581.5 92.5 577.9 94.4 576.7 96.7C575.4 98.9 575.0 102.2 575.0 105.0C575.0 107.8 576.4 111.9 576.7 113.3"/><path d="M576.7 113.3C573.3 113.3 561.4 112.2 556.7 113.3C551.9 114.4 551.4 118.1 548.3 120.0C545.3 121.9 540.4 122.8 538.3 125.0C536.2 127.2 536.2 130.7 535.8 133.3C535.4 136.0 535.8 139.6 535.8 140.8"/><path d="M576.7 113.3C577.2 114.4 580.3 118.3 580.0 120.0C579.7 121.7 576.1 121.7 575.0 123.3C573.9 125.0 574.4 128.1 573.3 130.0C572.2 131.9 569.4 133.2 568.3 135.0C567.2 136.8 566.9 139.9 566.7 140.8"/><path d="M445.8 98.3 L446.7 113.3 L460.8 127.5 L461.7 140.8"/><path d="M461.7 134.7 L505 134.7 L505 140.8"/><path d="M633.3 30.0C631.9 31.7 626.8 36.9 625.0 40.0C623.2 43.1 622.5 45.6 622.5 48.3C622.5 51.1 623.2 54.3 625.0 56.7C626.8 59.0 632.6 60.6 633.3 62.5C634.0 64.4 630.8 66.8 629.2 68.3C627.5 69.9 624.2 70.0 623.3 71.7C622.5 73.3 623.3 76.1 624.2 78.3C625.0 80.6 627.2 83.2 628.3 85.0C629.4 86.8 630.8 87.8 630.8 89.2C630.8 90.6 628.6 91.2 628.3 93.3C628.1 95.4 627.8 99.7 629.2 101.7C630.6 103.6 634.0 104.2 636.7 105.0C639.3 105.8 643.2 105.6 645.0 106.7C646.8 107.8 647.6 110.0 647.5 111.7C647.4 113.3 644.3 114.9 644.2 116.7C644.0 118.5 644.9 121.2 646.7 122.5C648.5 123.8 652.8 124.4 655.0 124.2C657.2 123.9 659.4 120.4 660.0 120.8C660.6 121.2 659.7 124.9 658.3 126.7C656.9 128.5 653.5 130.3 651.7 131.7C649.9 133.1 648.2 133.5 647.5 135.0C646.8 136.5 647.5 139.9 647.5 140.8"/><path d="M630.8 88.3C632.1 86.4 636.2 78.9 638.3 76.7C640.4 74.4 642.4 74.4 643.3 75.0C644.2 75.6 644.9 78.3 643.7 80.0C642.4 81.7 638.0 83.6 635.8 85.0C633.7 86.4 631.7 87.8 630.8 88.3"/><path d="M631.7 89.7C632.5 90.0 634.4 90.6 636.7 91.7C638.9 92.7 643.6 94.4 645.0 95.8C646.4 97.2 646.3 99.3 645.3 100.0C644.4 100.7 641.2 101.1 639.2 100.0C637.2 98.9 634.3 94.4 633.3 93.3"/><path d="M600 91.7 L626.7 91.3 L630.8 89.2"/><path d="M218.3 146.2 L218.3 181.2"/><path d="M218.3 181.2C218.9 181.9 220.3 183.5 221.7 185.3C223.1 187.1 224.7 190.2 226.7 192.0C228.6 193.8 231.1 194.5 233.3 196.2C235.6 197.8 238.2 199.9 240.0 202.0C241.8 204.1 242.8 206.2 244.2 208.7C245.6 211.2 247.1 214.2 248.3 217.0C249.6 219.8 250.8 222.6 251.7 225.3C252.5 228.1 253.6 231.2 253.3 233.7C253.1 236.2 250.8 238.1 250.0 240.3C249.2 242.6 247.8 244.8 248.3 247.0C248.9 249.2 251.7 251.4 253.3 253.7C255.0 255.9 256.7 258.6 258.3 260.3C260.0 262.1 262.5 263.4 263.3 264.0"/><path d="M244.2 205.8 L301.7 205.8"/><path d="M301.7 205.8C301.8 203.8 301.8 196.1 302.5 193.7C303.2 191.2 304.6 191.4 305.8 191.2C307.1 190.9 308.8 191.3 310.0 192.0C311.2 192.7 312.2 194.4 313.3 195.3C314.4 196.3 315.0 197.4 316.7 197.8C318.3 198.2 321.2 198.2 323.3 197.8C325.4 197.4 327.9 196.3 329.2 195.3C330.4 194.4 330.6 192.6 330.8 192.0"/><path d="M302.5 193.7 L302.5 227.5 L317.5 227.5 L317.5 256.5 L331.7 256.5"/><path d="M283.3 147.0C284.4 147.6 288.6 148.4 290.0 150.3C291.4 152.3 291.8 156.4 291.7 158.7C291.5 160.9 288.6 161.7 289.2 163.7C289.7 165.6 293.2 167.8 295.0 170.3C296.8 172.8 298.1 176.4 300.0 178.7C301.9 180.9 304.9 182.0 306.7 183.7C308.5 185.3 309.7 186.7 310.8 188.7C311.9 190.6 312.9 194.2 313.3 195.3"/><path d="M335.0 147.0C335.6 148.1 337.2 150.9 338.3 153.7C339.4 156.4 340.8 160.6 341.7 163.7C342.5 166.7 343.3 169.5 343.3 172.0C343.3 174.5 341.1 176.6 341.7 178.7C342.2 180.8 345.8 183.5 346.7 184.5"/><path d="M346.7 184.5 L330.8 185 L330.8 197 L343.3 198.7"/><path d="M343.3 198.7C344.4 199.8 347.8 203.4 350.0 205.3C352.2 207.3 354.7 208.7 356.7 210.3C358.6 212.0 360.7 213.4 361.7 215.3C362.6 217.3 362.4 220.9 362.5 222.0"/><path d="M339.2 155.3 L400 155.3"/><path d="M390.0 147.0C389.9 147.8 388.9 150.6 389.2 152.0C389.4 153.4 391.2 154.8 391.7 155.3"/><path d="M373.3 155.3C373.9 156.7 375.7 160.9 376.7 163.7C377.6 166.4 378.5 167.8 379.2 172.0C379.9 176.2 381.0 184.5 380.8 188.7C380.7 192.8 378.6 194.5 378.3 197.0C378.1 199.5 380.3 202.0 379.2 203.7C378.1 205.3 372.6 205.3 371.7 207.0C370.7 208.7 373.9 211.4 373.3 213.7C372.8 215.9 369.2 217.8 368.3 220.3C367.5 222.8 367.8 226.4 368.3 228.7C368.9 230.9 370.3 232.3 371.7 233.7C373.1 235.1 375.3 235.5 376.7 237.0C378.1 238.5 378.1 241.4 380.0 242.8C381.9 244.2 385.8 244.4 388.3 245.3C390.8 246.3 393.1 247.3 395.0 248.7C396.9 250.1 399.2 252.8 400.0 253.7"/><path d="M368.3 228.3 L400 228.3"/><path d="M416.7 344.3 L822.5 344.3"/><path d="M822.5 344.3C822.1 345.9 820.8 350.7 820.0 354.0C819.2 357.3 818.3 361.2 817.5 364.0C816.7 366.8 816.2 368.2 815.0 370.7C813.8 373.2 811.1 377.3 810.0 379.0C808.9 380.7 808.6 380.7 808.3 381.0"/><path d="M735.3 344.3C735.3 346.8 734.6 355.7 735.3 359.0C736.1 362.3 738.7 361.5 740.0 364.0C741.3 366.5 742.4 371.2 743.3 374.0C744.3 376.8 745.4 379.8 745.8 381.0"/><path d="M745.8 381.0C746.4 382.7 748.5 387.4 749.2 391.0C749.9 394.6 749.9 400.7 750.0 402.7"/><path d="M750 402.7 L750 470.2"/><path d="M749.2 391.3 L783.3 398.5 L805.8 398.5"/><path d="M808.3 381.0C807.9 382.4 806.2 386.4 805.8 389.3C805.4 392.2 805.1 395.7 805.8 398.5C806.5 401.3 808.8 403.1 810.0 406.0C811.2 408.9 811.7 412.9 813.3 416.0C815.0 419.1 817.5 421.6 820.0 424.3C822.5 427.1 826.4 429.1 828.3 432.7C830.3 436.3 830.3 442.4 831.7 446.0C833.1 449.6 835.6 451.0 836.7 454.3C837.8 457.7 836.9 462.1 838.3 466.0C839.7 469.9 843.1 475.9 845.0 477.7C846.9 479.5 848.1 476.8 850.0 476.8C851.9 476.8 853.9 477.2 856.7 477.7C859.4 478.1 859.4 480.2 866.7 479.3C873.9 478.5 894.4 473.8 900.0 472.7"/><path d="M745.0 470.2C745.8 470.2 745.3 469.1 750.0 470.2C754.7 471.3 767.8 474.8 773.3 476.8C778.9 478.9 779.4 482.8 783.3 482.7C787.2 482.5 792.5 476.8 796.7 476.0C800.8 475.2 805.0 477.2 808.3 477.7C811.7 478.1 813.6 478.2 816.7 478.5C819.7 478.8 823.3 478.6 826.7 479.3C830.0 480.0 833.3 482.4 836.7 482.7C840.0 482.9 845.0 481.3 846.7 481.0"/><path d="M745.0 470.2C744.4 468.4 743.3 461.3 741.7 459.3C740.0 457.4 737.8 458.5 735.0 458.5C732.2 458.5 728.1 460.6 725.0 459.3C721.9 458.1 719.2 454.3 716.7 451.0C714.2 447.7 711.5 441.8 710.0 439.3C708.5 436.8 707.9 436.6 707.5 436.0"/><path d="M745 470.2 L745 498.0"/><path d="M768.3 476 L767.5 498.0"/><path d="M285.0 314.0C285.6 314.6 287.9 315.4 288.3 317.3C288.8 319.3 286.9 323.2 287.5 325.7C288.1 328.2 290.8 330.1 291.7 332.3C292.5 334.6 293.6 337.1 292.5 339.0C291.4 340.9 286.4 342.3 285.0 344.0C283.6 345.7 283.3 347.3 284.2 349.0C285.0 350.7 289.3 352.1 290.0 354.0C290.7 355.9 289.4 358.7 288.3 360.7C287.2 362.6 283.6 363.7 283.3 365.7C283.1 367.6 286.7 370.4 286.7 372.3C286.7 374.3 284.0 375.9 283.3 377.3C282.6 378.8 282.6 380.4 282.5 381.0"/><path d="M288.3 314 L288.3 299.8 L302.5 299 L310 285.3 L361.7 284.8 L370 289 L381.7 295.7 L388.3 304 L389.2 360.7 L388.3 364 L303.3 364 L296.7 365.7 L286.7 364.0"/><path d="M330.8 256.5 L330.8 284.8"/><path d="M370.0 289.0C370.8 287.9 371.9 285.1 375.0 282.3C378.1 279.6 384.4 275.4 388.3 272.3C392.2 269.3 396.7 265.4 398.3 264.0"/><path d="M405.0 264.0C405.3 265.7 405.7 271.2 406.7 274.0C407.6 276.8 410.1 279.6 410.8 280.7"/><path d="M367.5 364 L367.5 381.0"/><path d="M388.3 364 L410.8 360.7"/><path d="M282.5 381.0C281.8 382.1 279.3 385.2 278.3 387.7C277.4 390.2 278.1 393.5 276.7 396.0C275.3 398.5 271.4 400.2 270.0 402.7C268.6 405.2 269.6 408.8 268.3 411.0C267.1 413.2 263.2 413.8 262.5 416.0C261.8 418.2 263.8 421.6 264.2 424.3C264.6 427.1 265.3 430.2 265.0 432.7C264.7 435.2 263.6 437.1 262.5 439.3C261.4 441.6 259.2 443.8 258.3 446.0C257.5 448.2 256.9 450.4 257.5 452.7C258.1 454.9 260.4 456.8 261.7 459.3C262.9 461.8 264.7 464.9 265.0 467.7C265.3 470.4 263.3 473.2 263.3 476.0C263.3 478.8 265.1 481.6 265.0 484.3C264.9 487.1 262.5 490.4 262.5 492.7C262.5 494.9 264.6 497.1 265.0 498.0"/><path d="M262.5 441.8 L295.8 441.3 L295.8 427.3 L310.5 427.3 L310.5 441 L345.8 441.3 L345.8 410.2 L367.5 409.7 L367.5 381.0"/><path d="M345.8 441.3 L354.2 436 L395.8 435.7 L395.8 427.7 L410.8 427.3"/><path d="M348.3 445.2 L360 445.2 L360 457.7 L364.2 461 L364.2 481 L379.2 481.8 L379.2 492.7 L365 493.5 L365 498.0"/><path d="M261.7 500.0C261.0 501.1 259.3 504.4 257.5 506.7C255.7 508.9 253.5 510.6 250.8 513.3C248.2 516.1 244.2 520.3 241.7 523.3C239.2 526.4 237.1 529.2 235.8 531.7C234.6 534.2 234.0 536.4 234.2 538.3C234.3 540.3 235.4 541.7 236.7 543.3C237.9 545.0 240.0 546.1 241.7 548.3C243.3 550.6 245.4 553.6 246.7 556.7C247.9 559.7 248.5 564.2 249.2 566.7C249.9 569.2 250.6 570.8 250.8 571.7"/><path d="M418.3 500 L418.3 582.5"/><path d="M417.8 500 L417.8 582.5"/><path d="M505.0 500.0C505.1 501.4 505.3 502.8 505.8 508.3C506.4 513.9 507.9 526.4 508.3 533.3C508.8 540.3 508.6 544.4 508.3 550.0C508.1 555.6 508.2 562.5 506.7 566.7C505.1 570.8 500.6 572.2 499.2 575.0C497.8 577.8 498.5 581.9 498.3 583.3"/><path d="M600 511.7 L580 513.3 L556.7 516.7 L546.7 526.7 L533.3 540 L523.3 550 L513.3 559.2 L543.3 561.3 L560.8 585.8 L561.7 609.2"/><path d="M575.0 500.0C575.8 502.2 577.8 508.6 580.0 513.3C582.2 518.1 586.4 523.9 588.3 528.3C590.3 532.8 589.7 537.2 591.7 540.0C593.6 542.8 598.6 544.2 600.0 545.0"/><path d="M580.0 512.5C584.6 512.3 602.8 512.3 607.5 511.3C612.2 510.4 607.4 508.6 608.3 506.7C609.3 504.8 612.5 501.1 613.3 500.0"/><path d="M607.5 511.3C608.2 513.1 610.3 518.6 611.7 521.7C613.1 524.8 613.9 528.1 615.8 530.0C617.8 531.9 621.0 531.9 623.3 533.3C625.7 534.7 628.8 535.8 630.0 538.3C631.2 540.8 630.8 545.3 630.8 548.3C630.8 551.4 629.9 553.9 630.0 556.7C630.1 559.4 631.4 563.6 631.7 565.0"/><path d="M580.0 518.3C580.8 519.4 583.3 521.9 585.0 525.0C586.7 528.1 589.0 533.6 590.0 536.7C591.0 539.7 588.6 541.9 590.8 543.3C593.1 544.7 599.3 544.2 603.3 545.0C607.4 545.8 612.5 547.2 615.0 548.3C617.5 549.4 617.8 551.1 618.3 551.7"/><path d="M631.7 565.0C630.3 565.8 626.4 568.6 623.3 570.0C620.3 571.4 616.1 571.7 613.3 573.3C610.6 575.0 607.9 576.9 606.7 580.0C605.4 583.1 605.3 588.3 605.8 591.7C606.4 595.0 610.1 596.4 610.0 600.0C609.9 603.6 606.4 610.5 605.0 613.3C603.6 616.2 602.2 616.4 601.7 617.0"/><path d="M631.7 565 L643.3 553.3 L651.7 538.3 L658.3 526.7 L663.3 521.3"/><path d="M643.3 553 L660.8 552.5 L661.7 548.3 L668.3 545.0"/><path d="M668.3 545.0C669.2 545.6 671.7 546.4 673.3 548.3C675.0 550.3 675.8 553.9 678.3 556.7C680.8 559.4 685.3 562.5 688.3 565.0C691.4 567.5 693.6 568.9 696.7 571.7C699.7 574.4 703.6 578.6 706.7 581.7C709.7 584.7 712.2 587.2 715.0 590.0C717.8 592.8 720.8 595.6 723.3 598.3C725.8 601.1 728.6 603.6 730.0 606.7C731.4 609.8 731.4 615.3 731.7 617.0"/><path d="M650 505 L653.3 515 L660 516.7 L661.7 521.3 L673.3 521.3 L676.7 520 L688.3 523.3 L696.7 525 L710 525.0"/><path d="M689.2 506.7 L690.8 523.3"/><path d="M708.3 500.0C708.2 501.4 707.2 505.0 707.5 508.3C707.8 511.7 709.0 516.7 710.0 520.0C711.0 523.3 711.9 525.6 713.3 528.3C714.7 531.1 716.1 534.2 718.3 536.7C720.6 539.2 724.2 541.1 726.7 543.3C729.2 545.6 731.7 547.8 733.3 550.0C735.0 552.2 736.1 555.6 736.7 556.7"/><path d="M744.2 500.0C744.2 501.7 743.8 506.4 744.2 510.0C744.6 513.6 744.6 518.1 746.7 521.7C748.8 525.3 754.3 528.9 756.7 531.7C759.0 534.4 760.0 534.2 760.8 538.3C761.7 542.5 761.2 551.4 761.7 556.7C762.1 561.9 763.6 566.1 763.3 570.0C763.1 573.9 760.0 576.7 760.0 580.0C760.0 583.3 760.8 587.8 763.3 590.0C765.8 592.2 772.2 591.7 775.0 593.3C777.8 595.0 779.2 598.9 780.0 600.0"/><path d="M765 500 L765 515 L773.3 520 L780 516.7"/><path d="M218.5 147.8 L231.6 147.8"/><path d="M259.4 442.1 L295.7 442.1 L295.7 427.5 L300 427.5"/><path d="M265.7 498.2 L300 498.2"/><path d="M250.8 571.7C251.6 570.3 253.7 565.7 255.8 563.3C257.9 560.9 258.2 559.2 263.3 557.5C268.4 555.8 280.0 554.3 286.7 553.3C293.4 552.3 298.9 551.6 303.3 551.7C307.7 551.9 310.5 553.5 313.3 554.2C316.1 554.9 317.8 556.4 320.0 555.8C322.2 555.2 322.2 550.9 326.7 550.8C331.1 550.7 339.5 552.6 346.7 555.0C353.9 557.4 361.9 561.5 370.0 565.0C378.1 568.5 387.2 572.9 395.0 575.8C402.8 578.7 413.1 581.4 416.7 582.5C420.3 583.6 413.1 582.0 416.7 582.5C420.3 583.0 430.8 584.5 438.3 585.8C445.8 587.0 455.9 589.9 461.7 590.0C467.5 590.1 469.1 588.1 473.3 586.7C477.5 585.3 482.8 582.3 486.7 581.7C490.6 581.1 494.5 581.8 496.7 583.3C498.9 584.8 498.3 588.6 500.0 590.8C501.7 593.0 504.2 594.9 506.7 596.7C509.2 598.5 512.8 599.8 515.0 601.7C517.2 603.6 518.0 606.9 520.0 608.3C522.0 609.7 524.1 610.5 526.7 610.0C529.3 609.5 532.8 605.1 535.8 605.0C538.8 604.9 542.1 608.8 545.0 609.2C547.9 609.6 550.7 607.5 553.3 607.5C555.9 607.5 558.6 608.7 560.8 609.2C563.0 609.8 564.1 609.8 566.7 610.8C569.4 611.8 573.4 613.3 576.7 615.0C580.0 616.7 583.9 618.7 586.7 620.8C589.5 622.9 591.1 625.4 593.3 627.5C595.5 629.6 596.9 631.5 600.0 633.3C603.1 635.1 607.8 637.0 611.7 638.3C615.6 639.5 619.7 639.5 623.3 640.8C626.9 642.0 630.0 644.5 633.3 645.8C636.6 647.0 640.6 647.7 643.3 648.3C645.9 648.9 649.2 648.4 649.2 649.2C649.2 650.0 644.5 651.8 643.3 653.3C642.0 654.8 641.4 656.6 641.7 658.3C642.0 660.0 643.1 661.8 645.0 663.3C646.9 664.8 649.7 666.5 653.3 667.5C656.9 668.5 662.2 669.1 666.7 669.2C671.2 669.3 675.6 668.9 680.0 668.3C684.4 667.7 688.8 666.8 693.3 665.8C697.8 664.8 702.8 662.6 706.7 662.5C710.6 662.4 713.4 664.2 716.7 665.0C720.0 665.8 723.4 667.2 726.7 667.5C730.0 667.8 733.4 667.4 736.7 666.7C740.0 666.0 742.8 664.7 746.7 663.3C750.6 661.9 757.8 659.1 760.0 658.3C762.2 657.5 758.3 659.4 760.0 658.3C761.7 657.2 767.2 653.6 770.0 651.7C772.8 649.8 773.7 649.2 776.7 646.7C779.8 644.2 784.7 639.8 788.3 636.7C791.9 633.6 795.5 630.1 798.3 628.3C801.1 626.5 801.9 626.2 805.0 625.8C808.1 625.4 813.1 625.2 816.7 625.8C820.3 626.4 823.4 627.7 826.7 629.2C830.0 630.7 833.1 633.2 836.7 635.0C840.3 636.8 845.2 638.0 848.3 640.0C851.3 642.0 853.3 644.2 855.0 646.7C856.7 649.2 857.6 651.4 858.3 655.0C859.0 658.6 859.5 664.4 859.2 668.3C858.9 672.2 857.4 675.5 856.7 678.3C856.0 681.1 853.3 682.8 855.0 685.0C856.7 687.2 863.4 692.0 866.7 691.7C870.0 691.4 872.5 686.1 875.0 683.3C877.5 680.5 879.5 677.8 881.7 675.0C883.9 672.2 886.4 667.2 888.3 666.7C890.2 666.2 891.6 669.8 893.3 671.7C895.0 673.6 896.3 676.9 898.3 678.3C900.2 679.7 902.5 680.3 905.0 680.0C907.5 679.7 910.8 678.7 913.3 676.7C915.8 674.8 918.0 671.6 920.0 668.3C922.0 665.0 923.3 660.0 925.0 656.7C926.7 653.4 929.0 651.6 930.0 648.3C931.0 645.0 931.3 640.3 930.8 636.7C930.2 633.1 928.8 629.5 926.7 626.7C924.6 623.9 921.1 622.2 918.3 620.0C915.5 617.8 912.1 616.1 910.0 613.3C907.9 610.5 906.3 606.3 905.8 603.3C905.2 600.2 904.9 597.2 906.7 595.0C908.5 592.8 914.2 591.7 916.7 590.0C919.2 588.3 920.9 585.8 921.7 585.0"/><path d="M787.5 585 L789.2 595 L793.3 608.3 L797.5 618.3 L798.3 628.3"/><path d="M783.3 618.3 L773.3 635 L772.5 641.7 L776.7 646.7"/><path d="M783.3 618.3C782.6 616.9 779.6 612.8 779.2 610.0C778.8 607.2 779.7 604.4 780.8 601.7C781.9 598.9 785.0 594.7 785.8 593.3"/><path d="M561.7 585 L561.7 610.0"/><path d="M594.2 615 L594.2 627.5"/><path d="M726.7 667.5C726.7 664.3 726.2 655.7 726.7 648.3C727.1 641.0 728.6 629.7 729.2 623.3C729.7 616.9 731.5 614.4 730.0 610.0C728.5 605.6 723.3 600.6 720.0 596.7C716.7 592.8 711.9 588.6 710.0 586.7C708.1 584.7 708.6 585.3 708.3 585.0"/><path d="M607.5 585.0C607.4 586.1 605.7 589.4 606.7 591.7C607.6 593.9 612.2 596.4 613.3 598.3C614.4 600.3 614.2 601.4 613.3 603.3C612.5 605.3 610.3 607.8 608.3 610.0C606.4 612.2 603.9 615.7 601.7 616.7C599.4 617.6 596.1 616.0 595.0 615.8"/><path d="M906.8 500.0C906.6 501.2 904.4 504.3 905.4 507.1C906.3 510.0 911.1 514.0 912.5 517.1C913.9 520.2 914.7 523.5 913.9 525.6C913.2 527.8 910.9 529.1 908.2 529.9C905.6 530.8 900.4 528.5 898.3 530.6C896.1 532.8 895.4 536.9 895.4 542.7C895.4 548.6 896.8 559.4 898.3 565.5C899.7 571.7 901.4 579.3 904.0 579.8C906.6 580.3 910.6 572.2 913.9 568.4C917.3 564.6 923.4 559.8 923.9 557.0C924.4 554.1 918.5 553.7 916.8 551.3C915.1 548.9 913.5 546.1 913.9 542.7C914.4 539.4 916.8 534.9 919.6 531.3C922.5 527.8 928.0 524.7 931.0 521.4C934.1 518.0 937.7 515.0 938.2 511.4C938.6 507.8 934.6 501.9 933.9 500.0"/><path d="M855.5 568.4 L898.3 565.5"/><path d="M923.9 562.7 L939.6 563.4"/><path d="M941.0 564.1C940.1 565.8 938.6 570.8 935.3 574.1C932.0 577.4 925.6 581.0 921.1 584.1C916.6 587.2 910.9 590.0 908.2 592.6C905.6 595.3 905.9 598.8 905.4 600.0"/><path d="M370.0 230.0C372.5 231.7 380.0 235.0 385.0 240.0C390.0 245.0 396.2 254.7 400.0 260.0C403.8 265.3 405.5 268.3 408.0 272.0C410.5 275.7 413.8 280.3 415.0 282.0"/></g>
<g font-family="DejaVu Sans, Liberation Sans, sans-serif" stroke="#3e3e3e" stroke-width=".1" stroke-linejoin="round" style="opacity:.995">
<text transform="translate(224.7 94.0) scale(1.28 1)" font-size="5.5" letter-spacing="0.01" fill="#3e3e3e">CADDO</text>
<text transform="translate(265.0 78.7) scale(1.28 1)" font-size="5.5" letter-spacing="0.14" fill="#3e3e3e">BOSSIER</text>
<text transform="translate(303.7 93.0) scale(1.28 1)" font-size="5.5" letter-spacing="0.10" fill="#3e3e3e">WEBSTER</text>
<text transform="translate(339.2 58.7) scale(1.28 1)" font-size="5.5" letter-spacing="0.09" fill="#3e3e3e">CLAIBORNE</text>
<text transform="translate(334.2 124.8) scale(1.28 1)" font-size="5.5" letter-spacing="0.12" fill="#3e3e3e">BIENVILLE</text>
<text transform="translate(445.0 53.2) scale(1.28 1)" font-size="5.5" letter-spacing="0.27" fill="#3e3e3e">UNION</text>
<text transform="translate(503.7 56.2) scale(1.28 1)" font-size="5.5" letter-spacing="0.29" fill="#3e3e3e">MOREHOUSE</text>
<text transform="translate(560.3 51.7) scale(1.28 1)" font-size="5.5" letter-spacing="0.10" fill="#3e3e3e">W. CARROLL</text>
<text transform="translate(399.0 82.0) scale(1.28 1)" font-size="5.5" letter-spacing="0.16" fill="#3e3e3e">LINCOLN</text>
<text transform="translate(460.0 103.2) scale(1.28 1)" font-size="5.5" letter-spacing="0.27" fill="#3e3e3e">OUACHITA</text>
<text transform="translate(525.0 109.2) scale(1.28 1)" font-size="5.5" letter-spacing="0.27" fill="#3e3e3e">RICHLAND</text>
<text transform="translate(410.8 132.3) scale(1.28 1)" font-size="5.5" letter-spacing="0.35" fill="#3e3e3e">JACKSON</text>
<text transform="translate(592.0 66.2) scale(1.28 1)" font-size="5.5" letter-spacing="0.13" fill="#3e3e3e">E. CARROLL</text>
<text transform="translate(594.0 121.7) scale(1.28 1)" font-size="5.5" letter-spacing="0.46" fill="#3e3e3e">MADISON</text>
<text transform="translate(668.7 47.7) scale(0.8 1)" font-family="Liberation Sans, sans-serif" font-size="12" letter-spacing="2.45" fill="#b0b0b2" stroke="none">MISSISSIPPI</text>
<text transform="translate(866.3 41.7) scale(0.8 1)" font-family="Liberation Sans, sans-serif" font-size="12" letter-spacing="2.57" fill="#b0b0b2" stroke="none">MISSISSIPPI</text>
<text transform="translate(240.0 173.2) scale(1.28 1)" font-size="5.5" letter-spacing="-0.04" fill="#3e3e3e">DE SOTO</text>
<text transform="translate(298.3 166.8) scale(1.28 1)" font-size="5.5" letter-spacing="0.05" fill="#3e3e3e">RED RIVER</text>
<text transform="translate(308.0 225.3) scale(1.28 1)" font-size="5.5" letter-spacing="0.11" fill="#3e3e3e">NATCHITOCHES</text>
<text transform="translate(271.7 254.0) scale(1.28 1)" font-size="5.5" letter-spacing="0.36" fill="#3e3e3e">SABINE</text>
<text transform="translate(752.0 370.8) scale(1.28 1)" font-size="5.5" letter-spacing="0.36" fill="#3e3e3e">WASHINGTON</text>
<text transform="translate(763.8 443.8) scale(1.28 1)" font-size="5.5" letter-spacing="0.29" fill="#3e3e3e">ST. TAMMANY</text>
<text transform="translate(779.2 495.0) scale(1.28 1)" font-size="5.5" letter-spacing="-0.07" fill="#3e3e3e">ORLEANS</text>
<text transform="translate(703.3 404.3) scale(1.28 1)" font-size="5.5" letter-spacing="0.25" fill="#3e3e3e">TANGIPAHOA</text>
<text transform="translate(688.0 481.0) scale(1.28 1)" font-size="5.5" letter-spacing="0.23" fill="#3e3e3e">ST. JOHN THE BAPTIST</text>
<text transform="translate(323.0 326.0) scale(1.28 1)" font-size="5.5" letter-spacing="0.28" fill="#3e3e3e">VERNON</text>
<text transform="translate(295.3 403.8) scale(1.28 1)" font-size="5.5" letter-spacing="0.16" fill="#3e3e3e">BEAUREGARD</text>
<text transform="translate(382.5 403.0) scale(1.28 1)" font-size="5.5" letter-spacing="0.19" fill="#3e3e3e">ALLEN</text>
<text transform="translate(295.3 471.8) scale(1.28 1)" font-size="5.5" letter-spacing="0.53" fill="#3e3e3e">CALCASIEU</text>
<text transform="translate(355.5 470.5) scale(1.28 1)" font-size="5.5" letter-spacing="0.50" fill="#3e3e3e">JEFFERSON DAVIS</text>
<text transform="translate(314.2 527.5) scale(1.28 1)" font-size="5.5" letter-spacing="0.42" fill="#3e3e3e">CAMERON</text>
<text transform="translate(441.7 540.0) scale(1.28 1)" font-size="5.5" letter-spacing="0.44" fill="#3e3e3e">VERMILION</text>
<text transform="translate(515.8 584.8) scale(1.28 1)" font-size="5.5" letter-spacing="0.11" fill="#3e3e3e">IBERIA</text>
<text transform="translate(571.7 566.7) scale(1.28 1)" font-size="5.5" letter-spacing="0.20" fill="#3e3e3e">ST. MARY</text>
<text transform="translate(650.8 504.5) scale(1.28 1)" font-size="5.5" letter-spacing="0.33" fill="#3e3e3e">ST. JAMES</text>
<text transform="translate(612.5 525.0) scale(1.28 1)" font-size="5.5" letter-spacing="0.38" fill="#3e3e3e">ASSUMPTION</text>
<text transform="translate(705.0 522.8) scale(1.28 1)" font-size="5.5" letter-spacing="0.05" fill="#3e3e3e">ST. CHARLES</text>
<text transform="translate(744.7 553.7) scale(1.28 1)" font-size="5.5" letter-spacing="0.27" fill="#3e3e3e">JEFFERSON</text>
<text transform="translate(709.2 576.7) scale(1.28 1)" font-size="5.5" letter-spacing="0.13" fill="#3e3e3e">LAFOURCHE</text>
<text transform="translate(643.3 615.3) scale(1.28 1)" font-size="5.5" letter-spacing="0.23" fill="#3e3e3e">TERREBONNE</text>
<text transform="translate(822.0 607.3) scale(1.28 1)" font-size="5.5" letter-spacing="0.30" fill="#3e3e3e">PLAQUEMINES</text>
<text transform="translate(831.3 523.0) scale(1.28 1)" font-size="5.5" letter-spacing="0.12" fill="#3e3e3e">ST. BERNARD</text>
<text transform="translate(792.8 536.4) scale(0.8 1)" font-family="Liberation Sans, sans-serif" font-size="11.5" letter-spacing="3.13" fill="#b0b0b2" stroke="none">LOUISIANA</text>
</g>
<g fill="none" stroke-linecap="butt">
<path d="M377.5 33L322.4 305V546L337.5 617L355 705" stroke="#e0f2ff" stroke-opacity=".4" stroke-width="2.4"/>
<path d="M377.5 33L322.4 305V546L337.5 617L355 705" stroke="#4088dc" stroke-width="1.350" stroke-dasharray="10.2 4.3" stroke-dashoffset="3"/>
</g>
<!-- selected feature glow + dialog pointer -->
<circle cx="401.8" cy="320.4" r="9" fill="#f4f23c" opacity=".9" filter="url(#gl)"/>
<circle cx="402" cy="320.3" r="4.2" fill="#8be000" stroke="#4a6a00" stroke-width=".8"/>
<circle cx="495.3" cy="73.3" r="4.7" fill="#000"/>
<circle cx="482.2" cy="94.5" r="4.7" fill="#000"/>
<circle cx="492.2" cy="107.8" r="4.7" fill="#000"/>
<circle cx="421.3" cy="79.3" r="4.7" fill="#000"/>
<circle cx="404.7" cy="144.7" r="4.7" fill="#000"/>
<circle cx="257.5" cy="169.8" r="4.7" fill="#000"/>
<circle cx="352.2" cy="193.0" r="4.7" fill="#000"/>
<circle cx="274.5" cy="241.3" r="4.7" fill="#000"/>
<circle cx="296.2" cy="251.8" r="4.7" fill="#000"/>
<circle cx="319.2" cy="369.0" r="4.7" fill="#000"/>
<circle cx="411.7" cy="374.0" r="4.7" fill="#000"/>
<circle cx="385.0" cy="428.8" r="4.7" fill="#000"/>
<circle cx="336.2" cy="458.2" r="4.7" fill="#000"/>
<circle cx="362.2" cy="465.7" r="4.7" fill="#000"/>
<circle cx="390.5" cy="469.0" r="4.7" fill="#000"/>
<circle cx="410.8" cy="471.8" r="4.7" fill="#000"/>
<rect x="267.4" y="87.7" width="4.6" height="4.6" fill="#e4e400"/><rect x="269.0" y="89.3" width="1.4" height="1.4" fill="#55590a"/>
<rect x="260.5" y="95.5" width="4.6" height="4.6" fill="#e4e400"/><rect x="262.1" y="97.1" width="1.4" height="1.4" fill="#55590a"/>
<rect x="303.5" y="83.0" width="4.6" height="4.6" fill="#e4e400"/><rect x="305.1" y="84.6" width="1.4" height="1.4" fill="#55590a"/>
<rect x="444.0" y="50.5" width="4.6" height="4.6" fill="#e4e400"/><rect x="445.6" y="52.1" width="1.4" height="1.4" fill="#55590a"/>
<rect x="518.0" y="52.2" width="4.6" height="4.6" fill="#e4e400"/><rect x="519.6" y="53.8" width="1.4" height="1.4" fill="#55590a"/>
<rect x="586.0" y="38.5" width="4.6" height="4.6" fill="#e4e400"/><rect x="587.6" y="40.1" width="1.4" height="1.4" fill="#55590a"/>
<rect x="418.0" y="90.9" width="4.6" height="4.6" fill="#e4e400"/><rect x="419.6" y="92.5" width="1.4" height="1.4" fill="#55590a"/>
<rect x="478.9" y="95.5" width="4.6" height="4.6" fill="#e4e400"/><rect x="480.5" y="97.1" width="1.4" height="1.4" fill="#55590a"/>
<rect x="495.2" y="93.0" width="4.6" height="4.6" fill="#e4e400"/><rect x="496.8" y="94.6" width="1.4" height="1.4" fill="#55590a"/>
<rect x="571.0" y="103.2" width="4.6" height="4.6" fill="#e4e400"/><rect x="572.6" y="104.8" width="1.4" height="1.4" fill="#55590a"/>
<rect x="402.7" y="137.7" width="4.6" height="4.6" fill="#e4e400"/><rect x="404.3" y="139.3" width="1.4" height="1.4" fill="#55590a"/>
<rect x="313.9" y="173.0" width="4.6" height="4.6" fill="#e4e400"/><rect x="315.5" y="174.6" width="1.4" height="1.4" fill="#55590a"/>
<rect x="348.9" y="221.4" width="4.6" height="4.6" fill="#e4e400"/><rect x="350.5" y="223.0" width="1.4" height="1.4" fill="#55590a"/>
<rect x="763.7" y="368.0" width="4.6" height="4.6" fill="#e4e400"/><rect x="765.3" y="369.6" width="1.4" height="1.4" fill="#55590a"/>
<rect x="796.7" y="373.4" width="4.6" height="4.6" fill="#e4e400"/><rect x="798.3" y="375.0" width="1.4" height="1.4" fill="#55590a"/>
<rect x="802.0" y="372.7" width="4.6" height="4.6" fill="#e4e400"/><rect x="803.6" y="374.3" width="1.4" height="1.4" fill="#55590a"/>
<rect x="711.0" y="381.2" width="4.6" height="4.6" fill="#e4e400"/><rect x="712.6" y="382.8" width="1.4" height="1.4" fill="#55590a"/>
<rect x="712.2" y="399.9" width="4.6" height="4.6" fill="#e4e400"/><rect x="713.8" y="401.5" width="1.4" height="1.4" fill="#55590a"/>
<rect x="724.4" y="419.5" width="4.6" height="4.6" fill="#e4e400"/><rect x="726.0" y="421.1" width="1.4" height="1.4" fill="#55590a"/>
<rect x="718.0" y="426.0" width="4.6" height="4.6" fill="#e4e400"/><rect x="719.6" y="427.6" width="1.4" height="1.4" fill="#55590a"/>
<rect x="768.0" y="425.0" width="4.6" height="4.6" fill="#e4e400"/><rect x="769.6" y="426.6" width="1.4" height="1.4" fill="#55590a"/>
<rect x="807.7" y="454.5" width="4.6" height="4.6" fill="#e4e400"/><rect x="809.3" y="456.1" width="1.4" height="1.4" fill="#55590a"/>
<rect x="339.7" y="322.0" width="4.6" height="4.6" fill="#e4e400"/><rect x="341.3" y="323.6" width="1.4" height="1.4" fill="#55590a"/>
<rect x="316.5" y="370.9" width="4.6" height="4.6" fill="#e4e400"/><rect x="318.1" y="372.5" width="1.4" height="1.4" fill="#55590a"/>
<rect x="300.2" y="432.4" width="4.6" height="4.6" fill="#e4e400"/><rect x="301.8" y="434.0" width="1.4" height="1.4" fill="#55590a"/>
<rect x="334.4" y="468.2" width="4.6" height="4.6" fill="#e4e400"/><rect x="336.0" y="469.8" width="1.4" height="1.4" fill="#55590a"/>
<rect x="489.7" y="509.7" width="4.6" height="4.6" fill="#e4e400"/><rect x="491.3" y="511.3" width="1.4" height="1.4" fill="#55590a"/>
<rect x="528.9" y="503.7" width="4.6" height="4.6" fill="#e4e400"/><rect x="530.5" y="505.3" width="1.4" height="1.4" fill="#55590a"/>
<rect x="548.9" y="519.7" width="4.6" height="4.6" fill="#e4e400"/><rect x="550.5" y="521.3" width="1.4" height="1.4" fill="#55590a"/>
<rect x="637.4" y="514.4" width="4.6" height="4.6" fill="#e4e400"/><rect x="639.0" y="516.0" width="1.4" height="1.4" fill="#55590a"/>
<rect x="667.2" y="538.5" width="4.6" height="4.6" fill="#e4e400"/><rect x="668.8" y="540.1" width="1.4" height="1.4" fill="#55590a"/>
<rect x="681.0" y="567.7" width="4.6" height="4.6" fill="#e4e400"/><rect x="682.6" y="569.3" width="1.4" height="1.4" fill="#55590a"/>
<rect x="766.4" y="523.5" width="4.6" height="4.6" fill="#e4e400"/><rect x="768.0" y="525.1" width="1.4" height="1.4" fill="#55590a"/>
<rect x="781.3" y="510.5" width="4.6" height="4.6" fill="#e4e400"/><rect x="782.9" y="512.1" width="1.4" height="1.4" fill="#55590a"/>
<rect x="780.3" y="513.1" width="4.6" height="4.6" fill="#e4e400"/><rect x="781.9" y="514.7" width="1.4" height="1.4" fill="#55590a"/>
<rect x="766.9" y="523.5" width="4.6" height="4.6" fill="#e4e400"/><rect x="768.5" y="525.1" width="1.4" height="1.4" fill="#55590a"/>
<rect x="403.7" y="256.7" width="4.6" height="4.6" fill="#e4e400"/><rect x="405.3" y="258.3" width="1.4" height="1.4" fill="#55590a"/>
<g fill="#8ce000" stroke="#2c3d00" stroke-width="0.7" opacity=".93">
<circle cx="289.2" cy="386.0" r="4.3"/>
<circle cx="331.3" cy="415.2" r="4.3"/>
<circle cx="303.7" cy="434.3" r="4.3"/>
<circle cx="347.5" cy="439.7" r="4.3"/>
<circle cx="335.8" cy="446.5" r="4.3"/>
<circle cx="350.5" cy="458.2" r="4.3"/>
<circle cx="316.7" cy="471.2" r="4.3"/>
<circle cx="362.8" cy="469.5" r="4.3"/>
<circle cx="375.2" cy="468.8" r="4.3"/>
<circle cx="282.2" cy="477.3" r="4.3"/>
<circle cx="327.5" cy="465.7" r="4.3"/>
<circle cx="340.0" cy="466.3" r="4.3"/>
<circle cx="335.0" cy="470.2" r="4.3"/>
<circle cx="339.2" cy="474.3" r="4.3"/>
<circle cx="312.8" cy="507.8" r="4.3"/>
<circle cx="337.5" cy="504.5" r="4.3"/>
<circle cx="351.3" cy="505.8" r="4.3"/>
<circle cx="434.5" cy="503.0" r="4.3"/>
</g>
<defs><filter id="gl" x="-30%" y="-30%" width="160%" height="160%"><feGaussianBlur stdDeviation=".7"/></filter>
<g id="hur">
<g fill="#0b0b0b" stroke="#fff" stroke-opacity=".75" stroke-width=".9" paint-order="stroke">
<path d="M-11 4.600L-5.8 .800L-2.3 6.200L-6.3 8.100L-10.6 7.200z"/>
<path d="M-2-6C1-8.2 4-8.9 7.7-8.6 5.2-7.8 3.7-6.5 3-5z"/>
<circle r="6.2"/>
</g>
<path d="M-7 2.900L-3.4 5.300L-7.5 7.4" fill="none" stroke="#fff" stroke-width="1"/>
</g>
</defs>
<g transform="translate(322.7 311.7)"><use href="#hur"/><text x="0" y="3" font-family="Liberation Sans, sans-serif" font-weight="bold" font-size="8.5" text-anchor="middle" fill="#fff">2</text></g>
<g transform="translate(322 539.2)" opacity=".88"><g fill="#111"><circle r="6.5"/><path d="M-2-6.300C1-8.5 4-9.2 7.7-8.9 5.2-8.1 3.7-6.8 3-5.300z"/><path d="M2 6.300C-1 8.5-4 9.2-7.7 8.9-5.2 8.1-3.7 6.8-3 5.300z"/></g><circle cx="-2" cy="0" r="3" fill="#6b7a1e" opacity=".55"/><text x="1.3" y="3" font-family="Liberation Sans, sans-serif" font-weight="bold" font-size="8.5" text-anchor="middle" fill="#f4f2e2">4</text></g>
<g transform="translate(377.5 31.5)"><use href="#hur"/><text x="0" y="2.5" font-family="Liberation Sans, sans-serif" font-weight="bold" font-size="6" text-anchor="middle" fill="#fff">TS</text></g>
<path d="M404 320.200L413.5 312.200V328z" fill="#303032"/>

</svg><div id="edgeL"></div><div id="edgeR"></div>
<!-- ===== header ===== -->
<div id="hdr">
  <div id="title">Common Operating Picture</div>
  <div id="sub">LOUISIANA NATIONAL GUARD</div>
  <div id="search" style="top:4px;letter-spacing:-0.33px">Enter address</div>
</div>
<svg class="abs" style="left:470px;top:0" width="320" height="30" viewBox="470 0 320 30">
<defs>
<linearGradient id="gcl" x1="0" y1="0" x2="0" y2="1"><stop offset="0" stop-color="#fff"/><stop offset="1" stop-color="#b8b8b8"/></linearGradient>
<linearGradient id="glk" x1="0" y1="0" x2="0" y2="1"><stop offset="0" stop-color="#2f63c4"/><stop offset="1" stop-color="#1c47a0"/></linearGradient>
</defs>
<!-- storm -->
<path d="M479 15.500a3.3 3.3 0 0 1 .6-6.5 5 5 0 0 1 9.2-1.6 3.8 3.8 0 0 1 5 4.3 2.5 2.5 0 0 1-.8 3.800z" fill="url(#gcl)"/>
<path d="M486.5 12.500l3 .5-2.5 3.5 1.5.3-5 5 1.5-4-1.5-.3z" fill="#f4b21e"/><path d="M487.5 13l1.5.3-2.5 3.200z" fill="#e8502a"/>
<path d="M480.5 16.500l1 2.5-1.5.5zM491 15.500l1.2 2.8-1.8.4zM477.5 14.500l.8 2-1.3.3z" fill="#6fa3dc"/>
<!-- list -->
<g><rect x="506" y="5.5" width="3" height="3" fill="#e9eef6" stroke="#3b6cb4" stroke-width=".8"/><rect x="506" y="10.5" width="3" height="3" fill="#ece8b0" stroke="#5a6a2a" stroke-width=".8"/><rect x="506" y="15" width="3" height="3" fill="#f3e2a0" stroke="#8a3a2a" stroke-width=".8"/><rect x="506" y="19.5" width="3" height="3" fill="#f1c9a0" stroke="#8a2a2a" stroke-width=".8"/>
<rect x="511" y="5.8" width="9" height="1.5" fill="#b9bcc2"/><rect x="511" y="10.8" width="6.5" height="1.5" fill="#6f9bd6"/><rect x="511" y="15.3" width="9" height="1.5" fill="#b9bcc2"/><rect x="511" y="20" width="7.5" height="1.5" fill="#6f9bd6"/></g>
<!-- layers -->
<path d="M533 18l8-3 10 2.5-8 3.500z" fill="#2e8fd6"/><path d="M537 17.500l4-1 3 1-3 1.500z" fill="#3fb65a"/>
<path d="M533 14.500l8-3 10 2.5-8 3.500z" fill="#4f9be0"/><path d="M534 14.500l7-2.5 9 2.2-7 3z" fill="#7ab6ea"/>
<path d="M533 11l8-3 10 2.5-8 3.500z" fill="#c9c9c9"/><path d="M535 11l6-2.2 8 2-6 2.700z" fill="#e2e2e2"/>
<rect x="537" y="24" width="9.5" height="1.5" fill="#fff"/>
<!-- map book -->
<path d="M561.5 8l6-2.500V20l-6 3z" fill="#b3473f"/><path d="M562.5 9.500l4-1.500v11l-4 2z" fill="#c95e55"/>
<path d="M567.5 5.500l10 2.500v14l-10-2z" fill="#e9ecef"/><path d="M577.5 8l2.5 1v13.500l-2.5-.5z" fill="#9fb6cf"/><path d="M578 12.500h1.700v2H578z" fill="#46b45a"/><path d="M578 15.500h1.700v2H578z" fill="#d45a5a"/>
<!-- no entry circle x -->
<circle cx="599" cy="14" r="8.6" fill="#f2f4f7" stroke="#c8242a" stroke-width="1.3"/><path d="M593 8l12 12M605 8l-12 12" stroke="#c8242a" stroke-width="1.3"/>
<!-- palette -->
<path d="M619 14c0-5 4.5-9 10-9 5 0 8 3.5 8 8 0 5.5-4.5 9.5-9 9.5-2.5 0-3.5-1.5-3-3.5.5-1.5-.5-2.5-2.5-2.500s-3.5-1-3.5-2.500z" fill="#e3d9a7"/>
<circle cx="626" cy="9" r="1.4" fill="#a3262a"/><circle cx="631" cy="8.5" r="1.3" fill="#e6d84a"/><circle cx="634" cy="11.5" r="1.3" fill="#e08a2a"/><circle cx="633" cy="16" r="1.4" fill="#8a2a2a"/><circle cx="628.5" cy="19" r="1.3" fill="#5aa62a"/><circle cx="623" cy="13" r="1.3" fill="#2a4a9a"/><circle cx="628" cy="14.5" r="1.2" fill="#9a2a2a"/>
<path d="M632 19l3.5 3.5" stroke="#8a8a8a" stroke-width="1"/><path d="M619.5 11l3 2" stroke="#cfd4da" stroke-width="1.4"/>
<!-- printer -->
<path d="M657 6.500h5v5h-5z" fill="#6aa6e6"/><path d="M650 11l7-2.5 7.5 3v6l-7 3.5-7.5-3.500z" fill="#3b82d6"/><path d="M651 12.500l6-2 5 2-6 2.500z" fill="#7fc0ee"/>
<path d="M647.5 19l6-2.5 8 3-5.5 3z" fill="#f2f4f7"/><path d="M658 17l6-3v6.500l-6 2z" fill="#e6e6e6"/><path d="M662 15.500l2-.8v3l-2 .8z" fill="#c45a2a"/>
<!-- pushpin -->
<path d="M675.5 7.500c1-2.5 4.5-2.8 6.5-1l2.5 2.500c3-.8 5.5 1.5 4.5 4.500l-3.5 5c-2 1.5-5 1-6-1.500l-.5-4.5-2.5-2c-1-.8-1.3-2-.9-3z" fill="#2a62c8"/>
<path d="M678 7.500l5 4" stroke="#6fa0e8" stroke-width="1.3"/><path d="M688 15.500l5.5 5.5" stroke="#d8d8d8" stroke-width="1.4"/>
<!-- pencil -->
<g transform="rotate(40 713 12)"><rect x="711" y="1" width="4" height="3" fill="#f0a0b0"/><rect x="711" y="4" width="4" height="2" fill="#c9c9c9"/><rect x="711" y="6" width="4" height="12" fill="#f09a2a"/><rect x="712.3" y="6" width="1.4" height="12" fill="#d8412a"/><path d="M711 18h4l-2 4z" fill="#ead9b0"/><path d="M712.3 20.700h1.400l-.7 1.500z" fill="#444"/></g>
<rect x="708" y="24" width="9.5" height="1.5" fill="#fff"/>
<!-- globe -->
<ellipse cx="741" cy="14.5" rx="9.5" ry="5.8" fill="#36b8e8" stroke="#1f3f9a" stroke-width="1"/><path d="M741 12c3-1.5 7-.5 9 1.5 0 2.5-2 4.5-5 5.5-1.5-1.5-3-4.5-4-7z" fill="#2fa85a"/><path d="M733 12c2-2.5 6-3.5 9-3" stroke="#9fe0f6" stroke-width="1.2" fill="none"/>
<!-- link -->
<rect x="762.5" y="2.5" width="19" height="18.5" rx="3" fill="url(#glk)" stroke="#9aa4b8" stroke-width="1"/>
<g fill="none" stroke="#eaf0fa" stroke-width="1.6"><rect x="771.5" y="6" width="7" height="4.6" rx="2.3" transform="rotate(-45 775 8.3)"/><rect x="765.5" y="12.5" width="7" height="4.6" rx="2.3" transform="rotate(-45 769 14.8)"/><path d="M770 13.500l4-4"/></g>
<path d="M768 22.500h6.500l-3.250 5z" fill="#fff"/>
</svg>
<!-- logo -->
<svg class="abs" style="left:0;top:-1px" width="42" height="40" viewBox="0 -1 42 40">
<circle cx="20" cy="18.5" r="19" fill="#17407f"/>
<circle cx="20" cy="18.5" r="17.8" fill="none" stroke="#0d2a5c" stroke-width="1"/>
<circle cx="20" cy="18.5" r="15.9" fill="none" stroke="#b9d2ee" stroke-width="2.4" stroke-dasharray="1.5 1"/>
<circle cx="20" cy="18.5" r="13.7" fill="#e21b23"/>
<path d="M19.5 7.500c1-.3 1.8.3 1.8 1.300l-.3 1.2 1.5 1 .5 4-1 .5.5 4.5-.5 6.5 1 1.500h-2.500l-.5-6-.5-.5-.5 5.5.5 1.500h-2.500l.5-8-.5-3.5-1-.5.5-4 2-1.5-.3-1.500c0-.7.3-1.3.8-1.500z" fill="#b9b9b9"/>
<path d="M18 17.500l3.5-.5.5 3-4 .5z" fill="#2a2a2a"/><path d="M18.5 24h3l.3 4h-3z" fill="#1a1a1a"/><path d="M19.3 7.500h1.800l.3 1.300h-2.400z" fill="#3a5a2a"/>
</svg>

<svg class="abs" style="left:0;top:36px" width="70" height="280" viewBox="0 36 70 280">
<defs><filter id="nsh" x="-20%" y="-20%" width="150%" height="150%"><feGaussianBlur stdDeviation="1.6"/></filter></defs>
<g opacity=".22" filter="url(#nsh)" fill="#000"><circle cx="34" cy="67" r="23"/><rect x="25" y="114" width="18" height="129" rx="3"/><rect x="25" y="248" width="18.5" height="62" rx="3"/><rect x="21" y="94" width="26" height="17"/></g>
<circle cx="32" cy="65" r="23" fill="#9e9e9e"/>
<circle cx="32" cy="65" r="10.3" fill="#a8a8a8" stroke="#fff" stroke-width="1.6"/>
<circle cx="32" cy="65" r="6" fill="#b9c6d6"/><path d="M29 61.500c1.5-1 3-.5 3.5 1s-1 2.5-.5 4-1.5 3-2.5 1.5-1.5-4.5-.5-6.500z" fill="#8fb4e0"/><circle cx="34.5" cy="66.5" r="2" fill="#c9c9c9"/>
<g fill="none" stroke="#fff" stroke-width="1.5" stroke-linecap="square"><path d="M28.5 49.500L32 46l3.5 3.5"/><path d="M28.5 80.500L32 84l3.5-3.5"/><path d="M16 61.500L12.5 65l3.5 3.5"/><path d="M48 61.500l3.5 3.5-3.5 3.5"/></g>
<path d="M19.5 92.500q5.5 3 11 4.500v7.500q-5.5 1.5-11 4.500q-1.5-8.5 0-16.500z" fill="#a1a1a1"/>
<path d="M44.5 92.500q-5.5 3-11 4.500v7.500q5.5 1.5 11 4.500q1.5-8.5 0-16.500z" fill="#a1a1a1"/>
<g fill="none" stroke="#fff" stroke-width="1.5"><path d="M27 97l-4.5 3.800L27 104.5"/><path d="M37 97l4.5 3.800L37 104.5"/></g>
<rect x="23" y="112" width="18" height="129.5" rx="2.5" fill="#979797"/>
<circle cx="32" cy="122.5" r="4.7" fill="#c9c9c9"/><path d="M29.5 122.500h5M32 120v5" stroke="#8a8a8a" stroke-width="1.4"/>
<circle cx="32" cy="232.5" r="4.7" fill="#c9c9c9"/><path d="M29.5 232.500h5" stroke="#8a8a8a" stroke-width="1.4"/>
<rect x="25.2" y="135.5" width="2.2" height="1" fill="#cfcfcf"/><rect x="25.2" y="139.9" width="2.2" height="1" fill="#cfcfcf"/><rect x="25.2" y="144.3" width="2.2" height="1" fill="#cfcfcf"/><rect x="25.2" y="148.8" width="2.2" height="1" fill="#cfcfcf"/><rect x="25.2" y="153.2" width="2.2" height="1" fill="#cfcfcf"/><rect x="25.2" y="157.6" width="2.2" height="1" fill="#cfcfcf"/><rect x="25.2" y="162.0" width="2.2" height="1" fill="#cfcfcf"/><rect x="25.2" y="166.4" width="2.2" height="1" fill="#cfcfcf"/><rect x="25.2" y="170.9" width="2.2" height="1" fill="#cfcfcf"/><rect x="25.2" y="175.3" width="2.2" height="1" fill="#cfcfcf"/><rect x="25.2" y="179.7" width="2.2" height="1" fill="#cfcfcf"/><rect x="25.2" y="184.1" width="2.2" height="1" fill="#cfcfcf"/><rect x="25.2" y="188.5" width="2.2" height="1" fill="#cfcfcf"/><rect x="25.2" y="193.0" width="2.2" height="1" fill="#cfcfcf"/><rect x="25.2" y="197.4" width="2.2" height="1" fill="#cfcfcf"/><rect x="25.2" y="201.8" width="2.2" height="1" fill="#cfcfcf"/><rect x="25.2" y="206.2" width="2.2" height="1" fill="#cfcfcf"/><rect x="25.2" y="210.6" width="2.2" height="1" fill="#cfcfcf"/><rect x="25.2" y="215.1" width="2.2" height="1" fill="#cfcfcf"/><rect x="25.2" y="219.5" width="2.2" height="1" fill="#cfcfcf"/><rect x="25.2" y="223.9" width="2.2" height="1" fill="#cfcfcf"/>
<rect x="33.2" y="130.5" width="2.6" height="91" rx="1.3" fill="#ececec"/>
<circle cx="34.5" cy="182.5" r="4" fill="#f1f1f1"/>
<rect x="23" y="246" width="18.5" height="62.5" rx="2.5" fill="#b7b7b7"/>
<rect x="25" y="248" width="15" height="17" rx="1" fill="#a3a3a3"/>
<path d="M29.5 259.500l-2-3.2 1-.6 1.6 1.600v-5.300h1.200v3.600h.5v-4.600h1.200v4.600h.5v-4h1.200v4.400h.5v-2.800h1.100v5.300q0 3-2.6 3.400h-2.200q-1.3-.6-2-2.400z" fill="#efefef"/>
<circle cx="31" cy="277" r="4.3" fill="#c4c4c4" stroke="#dedede" stroke-width="1"/><path d="M29 277h4M31 275v4" stroke="#e9e9e9" stroke-width="1.2"/><path d="M34.2 280.200l3 3" stroke="#cfcfcf" stroke-width="1.3"/>
<circle cx="31" cy="297.5" r="4.3" fill="#c4c4c4" stroke="#dedede" stroke-width="1"/><path d="M29 297.500h4" stroke="#e9e9e9" stroke-width="1.2"/><path d="M34.2 300.700l3 3" stroke="#cfcfcf" stroke-width="1.3"/>
</svg>
<div class="btn" style="left:1046px;top:42px;width:54px"><div class="abs" style="left:13px;top:1px;letter-spacing:-0.553px">More...</div></div>
<div class="btn" style="left:1107px;top:42px;width:77px"><svg class="abs" style="left:7px;top:6px" width="12" height="12" viewBox="0 0 12 12"><rect x="0" y="0" width="5" height="5" fill="#d8c85a"/><rect x="7" y="0" width="5" height="5" fill="#c9c9c9"/><rect x="0" y="7" width="5" height="5" fill="#a9a9a9"/><rect x="7" y="7" width="5" height="5" fill="#d8c85a"/></svg><div class="abs" style="left:26px;top:1px;letter-spacing:-0.141px">Basemap</div></div>

<!-- ===== Layer List panel ===== -->
<div class="panel" style="left:950px;top:85px;width:229px;height:228px">
  <div class="tb"></div>
  <div class="t" style="left:18px;top:5px;letter-spacing:-0.206px">Layer List</div>
  <div class="mini" style="left:198px;top:13px"></div>
  <div class="close" style="left:211px;top:2px"></div>
  <div class="t" style="left:15px;top:28px;letter-spacing:-0.282px">Layer Visibility</div>

  <div class="tri-r" style="left:19px;top:50px"></div><div class="cb" style="left:31px;top:48px"></div><div class="t b" style="left:46px;top:48px;width:139px;overflow:hidden;letter-spacing:-0.406px">Global COVID-19 Deaths by State</div><div class="menu" style="left:190px;top:49px"></div>
  <div class="tri-r" style="left:19px;top:68px"></div><div class="cb" style="left:31px;top:66px"></div><div class="t b" style="left:46px;top:67px;width:139px;overflow:hidden;letter-spacing:-0.468px">Power Outages By Parish CUSEC</div><div class="menu" style="left:190px;top:68px"></div>
  <div class="tri-d" style="left:18px;top:88px"></div><div class="cb ck" style="left:31px;top:85px"></div><div class="t b" style="left:46px;top:85px;letter-spacing:-0.428px">Hurricane Laura</div><div class="menu" style="left:190px;top:86px"></div>
  <div class="tri-r" style="left:32px;top:105px"></div><div class="cb ck" style="left:44px;top:103px"></div><div class="t" style="left:59px;top:104px;letter-spacing:-0.372px">Hurricane Laura Position</div>
  <div class="tri-r" style="left:32px;top:124px"></div><div class="cb ck" style="left:44px;top:122px"></div><div class="t" style="left:59px;top:122px;letter-spacing:-0.367px">Hurricane Laura Track</div>
  <div class="tri-r" style="left:32px;top:142px"></div><div class="cb" style="left:44px;top:140px"></div><div class="t" style="left:59px;top:141px;letter-spacing:-0.41px">wind_cont_v14</div>
  <div class="tri-r" style="left:32px;top:161px"></div><div class="cb" style="left:44px;top:159px"></div><div class="t" style="left:59px;top:159px;letter-spacing:-0.39px">wind_rast_v14</div>
  <div class="tri-r" style="left:19px;top:179px"></div><div class="cb ck" style="left:31px;top:177px"></div><div class="t b" style="left:46px;top:178px;width:139px;overflow:hidden;letter-spacing:-0.42px">Tropical Storms (NOAA Nowcoast)</div><div class="menu" style="left:190px;top:178px"></div>
  <div class="tri-r" style="left:19px;top:198px"></div><div class="cb" style="left:31px;top:196px"></div><div class="t b" style="left:46px;top:196px;width:139px;overflow:hidden;letter-spacing:-0.384px">All Distubances in Atlantic Basin</div><div class="menu" style="left:190px;top:197px"></div>

  <div class="sc up" style="left:203px;top:44px"></div>
  <div class="strack" style="left:208px;top:54px;height:150px"></div>
  <div class="sthumb" style="left:206px;top:66px;height:35px"></div>
  <div class="sc dn" style="left:203px;top:204px"></div>
</div>
<svg class="abs" style="left:932px;top:98px" width="34" height="26" viewBox="932 98 34 26">
<path d="M935 114.500l15-4 13 3.5-14 6z" fill="#1f5fb4"/><path d="M938 114.500l12-3 9 2.5-10 4.500z" fill="#2f9a4a"/><path d="M941 114l5-1.5 4 2-5 2z" fill="#d9c93a"/><path d="M950 112.500l7 1.8-4 2z" fill="#2a6fd0"/>
<path d="M935 109.500l15-4 13 3.5-14 6z" fill="#3f8ad8"/><path d="M937 109.500l13-3.3 11 3-12 5z" fill="#6aaae6"/>
<path d="M935 104.500l15-4 13 3.5-14 6z" fill="#bfc3c8"/><path d="M937 104.500l13-3.3 11 3-12 5z" fill="#dfe2e6"/><circle cx="948" cy="104" r="1" fill="#d03a3a"/><circle cx="953" cy="106" r="1" fill="#d03a3a"/><circle cx="943" cy="105.5" r=".8" fill="#d03a3a"/>
</svg>


<!-- ===== side control ===== -->
<div class="abs" style="left:1183px;top:231px;width:15px;height:60px;background:#030303;border-radius:3px;box-shadow:1px 1px 2px rgba(0,0,0,.4)">
  <svg width="15" height="60" viewBox="0 0 15 60"><path d="M4.5 10.5l3 2.5-3 2.500zM7.5 10.500l3 2.5-3 2.500z" fill="#fff"/><path d="M4.5 32l3.5-3 3.5 3zM4.5 46l3.5 3 3.5-3z" fill="#fff"/></svg>
</div>

<!-- ===== Edit panel ===== -->
<div class="panel" style="left:942px;top:342px;width:237px;height:237px">
  <div class="tb"></div>
  <div class="t" style="left:19px;top:5px;letter-spacing:-0.211px">Edit</div>
  <div class="mini" style="left:206px;top:13px"></div>
  <div class="close" style="left:219px;top:3px"></div>
  <div class="t" style="left:19px;top:33px;letter-spacing:-0.31px">Select template to create feature</div>
  <div class="cbd" style="left:19px;top:55px"></div><div class="t e" style="left:33px;top:55px;font-weight:bold;font-size:10.4px;transform:scaleX(0.844);transform-origin:0 50%;-webkit-text-stroke:0">Aviation_30min_SAR_Grid</div>
  <div class="cbd" style="left:19px;top:73px"></div><div class="t e" style="left:33px;top:73px;font-weight:bold;font-size:10.4px;transform:scaleX(0.849);transform-origin:0 50%;-webkit-text-stroke:0">GARS 30min Corner Points</div>
  <div class="cbd" style="left:19px;top:92px"></div><div class="t e" style="left:33px;top:92px;font-weight:bold;font-size:10.4px;transform:scaleX(0.835);transform-origin:0 50%;-webkit-text-stroke:0">J6 Strategic Signal Assets</div>
  <div class="cbd" style="left:19px;top:110px"></div><div class="t e" style="left:33px;top:110px;font-weight:bold;font-size:10.4px;transform:scaleX(0.856);transform-origin:0 50%;-webkit-text-stroke:0">GARS_15min_SAR_Grid</div>
  <div class="cbd" style="left:19px;top:129px"></div><div class="t e" style="left:33px;top:129px;font-weight:bold;font-size:10.4px;transform:scaleX(0.858);transform-origin:0 50%;-webkit-text-stroke:0">GARS_5min_SAR_Grid</div>
  <div class="cbd" style="left:19px;top:147px"></div><div class="t e" style="left:33px;top:147px;font-weight:bold;font-size:10.4px;transform:scaleX(0.829);transform-origin:0 50%;-webkit-text-stroke:0">State_AO</div>
  <div class="cbd" style="left:19px;top:166px"></div><div class="t e" style="left:33px;top:166px;font-weight:bold;font-size:10.4px;transform:scaleX(0.865);transform-origin:0 50%;-webkit-text-stroke:0">DRU_AO</div>
  <div class="sc up" style="left:208px;top:52px"></div>
  <div class="strack" style="left:213px;top:62px;height:104px"></div>
  <div class="sthumb" style="left:211px;top:63px;height:47px"></div>
  <div class="sc dn" style="left:208px;top:166px"></div>
  <div class="abs" style="left:19px;top:181px;width:30px;height:18px;border-radius:2px;background:linear-gradient(#2e2e30,#111113)"><div class="abs" style="left:15px;top:0;width:1px;height:18px;background:#0a0a0a"></div><svg width="30" height="18" viewBox="0 0 30 18"><path d="M5.5 5.500l4.5 3.5-4.5 3.500z" fill="#9a9a9a"/><path d="M19 7.500h6.500l-3.250 3.500z" fill="#f0f0f0"/></svg></div>
<div class="abs" style="left:54px;top:181px;width:29px;height:17.500px;border-radius:2px;background:linear-gradient(#fff 0,#f3f3f3 55%,#cdcdcd)"><svg width="29" height="18" viewBox="0 0 29 18"><path d="M7.5 6l6-2.5 8.5 5.5-1 3.5-6 2-7-5z" fill="#c45a64"/><path d="M8 5.500l5.5-2 8 5-5.5 2.500z" fill="#f0b6be"/><path d="M15 12.500l6.5-2.800v2.800l-6.5 2.500z" fill="#a8343e"/></svg></div>
<div class="abs" style="left:89px;top:181px;width:29px;height:17.500px;border-radius:2px;background:linear-gradient(#fff 0,#f3f3f3 55%,#cdcdcd)"><svg width="29" height="18" viewBox="0 0 29 18"><path d="M10.5 5l8 8M18.5 5l-8 8" stroke="#c0303a" stroke-width="2.2"/><ellipse cx="14.5" cy="14.5" rx="4.5" ry="1" fill="#d8d0d0"/></svg></div>
<div class="abs" style="left:123px;top:181px;width:30px;height:18px;border-radius:2px;background:linear-gradient(#242426,#19191b)"><svg width="30" height="18" viewBox="0 0 30 18"><path d="M19 7.500h6.500l-3.250 3.500z" fill="#5a5a5a"/><circle cx="7.5" cy="9.5" r=".8" fill="#3a3a3a"/></svg></div>
<div class="abs" style="left:158px;top:181px;width:29px;height:17.500px;border-radius:2px;background:#5f5f61"><svg width="29" height="18" viewBox="0 0 29 18"><path d="M9 6.500h4.500v-2l-6 .5v5.500l1.5-.5z" fill="#20406a"/><path d="M10 8c4-2.5 8-2 9.5 1.5" stroke="#4a4c50" stroke-width="1.6" fill="none"/></svg></div>
<div class="abs" style="left:193px;top:181px;width:29px;height:17.500px;border-radius:2px;background:#5f5f61"><svg width="29" height="18" viewBox="0 0 29 18"><path d="M20 6.500h-4.500v-2l6 .5v5.500l-1.5-.5z" fill="#20406a"/><path d="M19 8c-4-2.5-8-2-9.5 1.5" stroke="#4a4c50" stroke-width="1.6" fill="none"/></svg></div>

</div>
<svg class="abs" style="left:924px;top:348px" width="36" height="38" viewBox="924 348 36 38">
<g transform="rotate(40 941 366)"><rect x="938" y="348" width="6.5" height="4.5" rx="1" fill="#f2a3b4"/><rect x="938" y="352.5" width="6.5" height="3.5" fill="#c9ccd0"/><rect x="938" y="353.5" width="6.5" height="1" fill="#8a8d92"/><rect x="938" y="356" width="6.5" height="20" fill="#f29a2a"/><rect x="940.2" y="356" width="2.2" height="20" fill="#e0502a"/><path d="M938 376h6.500l-3.250 7z" fill="#ead8b0"/><path d="M940.2 380.500h2.100l-1.050 2.800z" fill="#4a4a4a"/></g>
</svg>


<!-- ===== Attributes dialog ===== -->
<div class="abs" id="attr" style="left:413px;top:142px;width:294px;height:355px">
  <div class="abs" style="left:-.5px;top:-.25px;width:294.5px;height:355px;border-radius:3px;background:rgba(27,27,29,.93);box-shadow:0 0 1px rgba(255,255,255,.55)"></div>
  <div class="abs" style="left:2px;top:19.5px;width:289px;height:307.5px;background:rgba(4,4,6,.97)"></div>
  <div class="t" style="left:3px;top:4px;letter-spacing:-0.382px">Attributes</div>
  <div class="abs" style="left:277px;top:3px;width:13px;height:13px;border-radius:2px;background:linear-gradient(#9a9a9a,#6c6c6c)"><svg width="13" height="13" viewBox="0 0 13 13"><path d="M3.5 3.500l6 6M9.5 3.500l-6 6" stroke="#2a2a2a" stroke-width="1.6"/></svg></div>
  <div class="sc up" style="left:277px;top:19px"></div>
  <div class="strack" style="left:282px;top:29px;height:288px"></div>
  <div class="sthumb" style="left:280px;top:30px;height:66px"></div>
  <div class="sc dn" style="left:277px;top:317px"></div>

  <div class="t b" style="right:189px;top:38px;letter-spacing:-0.755px">POD_Status</div>
  <div class="abs" style="left:114px;top:36px;width:152px;height:14px;background:linear-gradient(#2c2c2e,#161618);border-radius:2px"></div>
  <div class="abs" style="left:252px;top:36px;width:1px;height:14px;background:#111"></div>
  <div class="abs" style="left:256px;top:41px;border-top:3.500px solid #e8e8e8;border-left:3px solid transparent;border-right:3px solid transparent"></div>
  <div class="t" style="left:118px;top:38px;letter-spacing:-0.688px">Open</div>

  <div class="t b" style="right:189px;top:70px;letter-spacing:-0.71px">POD_Site</div>
  <div class="abs" style="left:113px;top:66px;width:154px;height:116px;background:#000;border:1px solid #8c8c8c"></div>
  <div class="t" style="left:116px;top:70px;letter-spacing:-0.276px">Oak Hill High School, Elmer</div>

  <div class="t b" style="right:189px;top:201px;letter-spacing:-0.654px">Parish</div>
  <div class="abs" style="left:113px;top:198px;width:154px;height:116px;background:#000;border:1px solid #8c8c8c"></div>
  <div class="t" style="left:116px;top:201px;letter-spacing:-0.215px">Rapides</div>

  <div class="t" style="left:104px;top:334px;text-decoration:underline;letter-spacing:-0.281px">Delete</div>
  <div class="abs" style="left:136px;top:332px;width:54px;height:16px;border-radius:2px;background:linear-gradient(#353537,#141416)"></div><div class="t" style="left:157px;top:335px;letter-spacing:-1.448px">OK</div>
</div>

<!-- ===== scale bar ===== -->
<svg class="abs" style="left:0;top:650px" width="280" height="52" viewBox="0 650 280 52">
  <path d="M5 668v14M5 675h236M152 668v7M241 675v7" stroke="#fff" stroke-opacity=".85" stroke-width="3.6" fill="none" stroke-linecap="square"/><path d="M5 668v14M5 675h236M152 668v7M241 675v7" stroke="#000" stroke-width="1.8" fill="none"/>
  <text x="152.5" y="665" font-family="Liberation Sans, sans-serif" font-size="8.2" text-anchor="middle" fill="#000" stroke="#f4f4f4" stroke-width="2" paint-order="stroke" stroke-linejoin="round">100 km</text>
  <text x="241" y="688.5" font-family="Liberation Sans, sans-serif" font-size="8.2" text-anchor="middle" fill="#000" stroke="#e4e4e4" stroke-width="2" paint-order="stroke" stroke-linejoin="round">100 mi</text>
</svg>

<!-- ===== status bar ===== -->
<div class="abs" id="status" style="left:642px;top:685px;width:554px;height:13px;border-radius:3px;background:#212224;font-family:'DejaVu Sans Condensed','DejaVu Sans',sans-serif;font-weight:bold;font-size:8px;line-height:13px;color:#fff;white-space:nowrap">
<span class="abs" style="left:2.0px;letter-spacing:-0.42px">Lat:</span><span class="abs" style="left:21.3px;letter-spacing:-0.08px">30° 01.562' N</span><span class="abs" style="left:81.0px;letter-spacing:-0.61px">Lon:</span><span class="abs" style="left:101.6px;letter-spacing:-0.02px">95° 32.442' W</span><span class="abs" style="left:166.3px;letter-spacing:0.00px">|</span><span class="abs" style="left:176.0px;letter-spacing:-0.42px">Lat:</span><span class="abs" style="left:195.3px;letter-spacing:-0.16px">30.0260398</span><span class="abs" style="left:247.0px;letter-spacing:-0.61px">Lon:</span><span class="abs" style="left:269.2px;letter-spacing:-0.13px">-95.5406981</span><span class="abs" style="left:326.7px;letter-spacing:0.00px">|</span><span class="abs" style="left:336.9px;letter-spacing:-0.62px">MGRS:</span><span class="abs" style="left:367.0px;letter-spacing:-0.13px">15RTP5497924390</span><span class="abs" style="left:449.2px;letter-spacing:0.00px">|</span><span class="abs" style="left:459.0px;letter-spacing:-0.35px">Map Scale:</span><span class="abs" style="left:506.0px;letter-spacing:-0.32px">1:2,311,162</span>
</div>
</body>
</html>
